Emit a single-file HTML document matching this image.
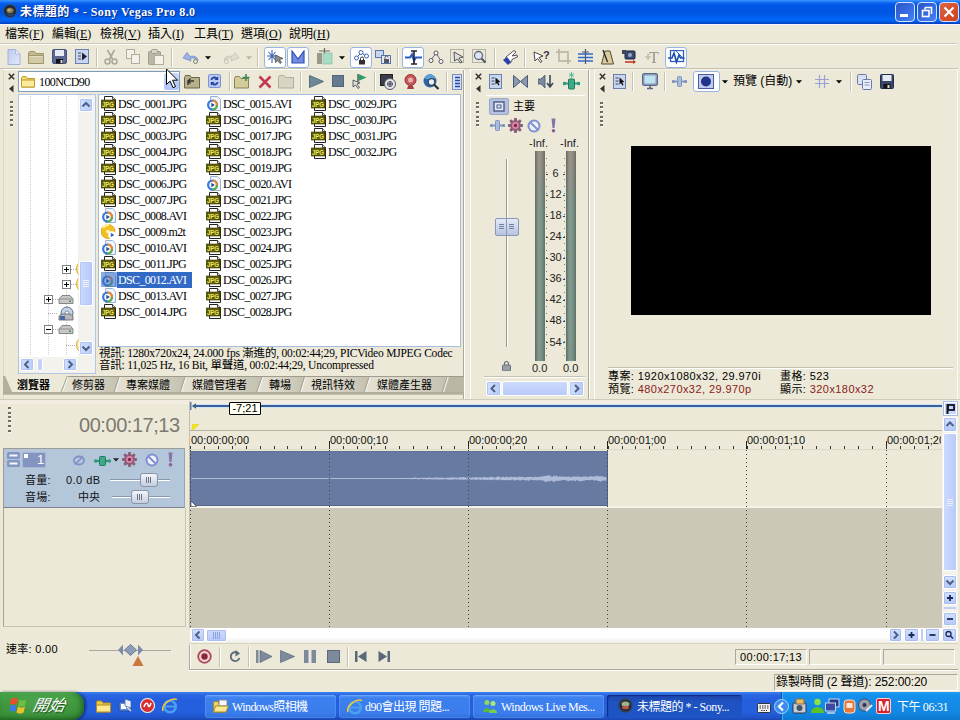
<!DOCTYPE html>
<html><head><meta charset="utf-8"><title>Sony Vegas Pro 8.0</title>
<style>
html,body{margin:0;padding:0}
body{width:960px;height:720px;position:relative;overflow:hidden;background:#ECE9D8;
 font-family:"Liberation Sans","Noto Sans CJK TC",sans-serif;font-size:12px;color:#000}
body div, body svg{position:absolute;box-sizing:border-box}
.ser{font-family:"Liberation Serif","Noto Sans CJK TC",serif}
.sans{font-family:"Liberation Sans","Noto Sans CJK TC",sans-serif}
</style></head><body>

<!-- gen_top -->
<div style="left:0px;top:0px;width:960px;height:24px;background:linear-gradient(to bottom,#3A94FF 0,#2A86FC 1px,#0A64F0 3px,#0057E6 5px,#0054E2 12px,#0058E8 15px,#0264F4 18px,#0468F8 20px,#0258E0 22px,#003CB8 24px)"></div>
<div style="left:0px;top:24px;width:960px;height:1px;background:#F4F4FC"></div>
<svg style="left:3px;top:4px;" width="14" height="14" viewBox="0 0 14 14"><circle cx="7" cy="7" r="6.500" fill="#1E2A3C"/><circle cx="7" cy="7" r="6.500" fill="none" stroke="#3C5C7C" stroke-width=".8"/><ellipse cx="7" cy="6.500" rx="3.600" ry="2.800" fill="#8A7A50"/><ellipse cx="6.200" cy="6" rx="1.600" ry="1.200" fill="#C8B070"/><path d="M2.500 9.500a5 5 0 009 0" fill="#2A4468"/></svg>
<div class="ser" style="left:20px;top:4px;white-space:nowrap;color:#fff;font-weight:bold;font-size:12px;line-height:16px;text-shadow:1px 1px 0 #0A2A80;letter-spacing:0.42px">未標題的 * - Sony Vegas Pro 8.0</div>
<div style="left:895px;top:2px;width:20px;height:20px;background:linear-gradient(135deg,#2A56C8 0%,#3468DC 45%,#3C74EC 75%,#4C88F8 100%);border:1px solid #D4E2FC;border-radius:4px"></div>
<div style="left:900px;top:14px;width:8px;height:3px;background:#fff"></div>
<div style="left:917px;top:2px;width:20px;height:20px;background:linear-gradient(135deg,#2A56C8 0%,#3468DC 45%,#3C74EC 75%,#4C88F8 100%);border:1px solid #D4E2FC;border-radius:4px"></div>
<svg style="left:921px;top:6px;" width="12" height="12" viewBox="0 0 12 12"><path d="M4 1.5h6.5v6.5M4 1.5v2" stroke="#fff" stroke-width="1.6" fill="none"/><rect x="1.5" y="4.5" width="6.5" height="6" stroke="#fff" stroke-width="1.6" fill="none"/></svg>
<div style="left:939px;top:2px;width:20px;height:20px;background:linear-gradient(135deg,#D86848 0%,#D8502C 50%,#C84420 100%);border:1px solid #D4E2FC;border-radius:4px"></div>
<svg style="left:943px;top:6px;" width="12" height="12" viewBox="0 0 12 12"><path d="M1.500 1.500l9 9M10.500 1.500l-9 9" stroke="#fff" stroke-width="2.2" fill="none"/></svg>
<div class="ser" style="left:5px;top:27px;white-space:nowrap;font-size:12px;line-height:14px">檔案(<u>F</u>)</div>
<div class="ser" style="left:52px;top:27px;white-space:nowrap;font-size:12px;line-height:14px">編輯(<u>E</u>)</div>
<div class="ser" style="left:100px;top:27px;white-space:nowrap;font-size:12px;line-height:14px">檢視(<u>V</u>)</div>
<div class="ser" style="left:148px;top:27px;white-space:nowrap;font-size:12px;line-height:14px">插入(<u>I</u>)</div>
<div class="ser" style="left:194px;top:27px;white-space:nowrap;font-size:12px;line-height:14px">工具(<u>T</u>)</div>
<div class="ser" style="left:241px;top:27px;white-space:nowrap;font-size:12px;line-height:14px">選項(<u>O</u>)</div>
<div class="ser" style="left:289px;top:27px;white-space:nowrap;font-size:12px;line-height:14px">說明(<u>H</u>)</div>
<div style="left:0px;top:43px;width:957px;height:1px;background:#CFCBBB"></div>
<div style="left:0px;top:44px;width:957px;height:1px;background:#fff"></div>
<div style="left:0px;top:68px;width:958px;height:1px;background:#C5C2B0"></div>
<svg style="left:7px;top:49px;" width="14" height="16" viewBox="0 0 14 16"><defs><linearGradient id="nd" x1="0" x2="1" y1="0" y2="1"><stop offset="0" stop-color="#BCC8EE"/><stop offset="1" stop-color="#E4EAFA"/></linearGradient></defs><path d="M1 .5h7.500l4.500 4.500v10.500H1z" fill="url(#nd)" stroke="#A4B2DE"/><path d="M8.500 .5v4.500h4.500z" fill="#EEF2FC" stroke="#A4B2DE" stroke-width=".8"/></svg>
<svg style="left:28px;top:50px;" width="17" height="14" viewBox="0 0 17 14"><path d="M.5 3V13.500h15V3.500H8L6.500 1.500H1.500z" fill="#C4BA92" stroke="#A0966E"/><path d="M.5 13.500V5.500h15v8z" fill="#D2CAA6" stroke="#A0966E"/><path d="M1.500 6.500h13" stroke="#E4DEC4"/></svg>
<svg style="left:52px;top:49px;" width="15" height="15" viewBox="0 0 15 15"><rect x=".5" y=".5" width="14" height="14" rx="1.500" fill="#5A6892" stroke="#46527C"/><rect x="3" y="1" width="9" height="6" fill="#E6EAF4"/><rect x="4" y="10" width="7" height="4.500" fill="#111"/><rect x="8.500" y="11" width="2" height="3" fill="#ddd"/></svg>
<svg style="left:75px;top:49px;" width="14" height="15" viewBox="0 0 14 15"><rect x=".5" y=".5" width="13" height="14" fill="#C9D6F0" stroke="#6A7FB0"/><path d="M3 4h3M3 7h3M3 10h3" stroke="#445" /><path d="M7 3.500v8l5-4z" fill="#223"/></svg>
<div style="left:96px;top:48px;width:1px;height:19px;background:#C5C2B0"></div>
<div style="left:97px;top:48px;width:1px;height:19px;background:#fff"></div>
<svg style="left:104px;top:49px;" width="14" height="16" viewBox="0 0 14 16"><path d="M3.500 1l5 9M10.500 1l-5 9" stroke="#A9A798" stroke-width="1.600" fill="none"/><circle cx="3.500" cy="12.500" r="2.500" fill="none" stroke="#A9A798" stroke-width="1.500"/><circle cx="10.500" cy="12.500" r="2.500" fill="none" stroke="#A9A798" stroke-width="1.500"/></svg>
<svg style="left:126px;top:49px;" width="14" height="16" viewBox="0 0 14 16"><rect x=".5" y=".5" width="8" height="9" fill="#F4F2E8" stroke="#B0AD9C"/><rect x="5.500" y="5.500" width="8" height="9" fill="#F4F2E8" stroke="#B0AD9C"/></svg>
<svg style="left:148px;top:49px;" width="16" height="16" viewBox="0 0 16 16"><rect x=".5" y="2.500" width="12" height="13" rx="1" fill="#B9B6A6" stroke="#A09D8C"/><rect x="3.500" y=".5" width="6" height="4" rx="1" fill="#D8D5C6" stroke="#A09D8C"/><rect x="6.500" y="6.500" width="9" height="9" fill="#F4F2E8" stroke="#B0AD9C"/></svg>
<div style="left:171px;top:48px;width:1px;height:19px;background:#C5C2B0"></div>
<div style="left:172px;top:48px;width:1px;height:19px;background:#fff"></div>
<svg style="left:182px;top:51px;" width="18" height="13" viewBox="0 0 18 13"><path d="M1 7L5 1.500 8 5.500c4-1 7 0 8 4-2-2.500-5-3-8-2L9 10z" fill="#9DB3E6" stroke="#6F8AC8" stroke-width=".8"/><circle cx="13.500" cy="10.500" r="2" fill="#ECE9D8" stroke="#7A7A70"/></svg>
<svg style="left:205px;top:56px;" width="6" height="4" viewBox="0 0 6 4"><path d="M0 .3h6l-3 3.200z" fill="#000"/></svg>
<svg style="left:222px;top:51px;" width="18" height="13" viewBox="0 0 18 13"><path d="M17 7L13 1.500 10 5.500c-4-1-7 0-8 4 2-2.500 5-3 8-2L9 10z" fill="#E0DED0" stroke="#C4C1B0" stroke-width=".8"/><circle cx="4.500" cy="10.500" r="2" fill="#ECE9D8" stroke="#C4C1B0"/></svg>
<svg style="left:246px;top:56px;" width="6" height="4" viewBox="0 0 6 4"><path d="M0 .3h6l-3 3.200z" fill="#B8B5A4"/></svg>
<div style="left:257px;top:48px;width:1px;height:19px;background:#C5C2B0"></div>
<div style="left:258px;top:48px;width:1px;height:19px;background:#fff"></div>
<div style="left:264px;top:47px;width:22px;height:21px;background:#fff;border:1px solid #98B5E2;border-radius:3px"></div>
<svg style="left:267px;top:50px;" width="17" height="15" viewBox="0 0 17 15"><path d="M5 0v13M0 6h11M1.500 2l7 8M8.500 2l-7 8" stroke="#3C66B0" stroke-width="1.100"/><path d="M8 5l8 3.500-3.500 1 2 3-1.500 1-2-3-2.500 2z" fill="#8C8C8C" stroke="#444" stroke-width=".7"/></svg>
<div style="left:287px;top:47px;width:22px;height:21px;background:#fff;border:1px solid #98B5E2;border-radius:3px"></div>
<svg style="left:291px;top:50px;" width="14" height="14" viewBox="0 0 14 14"><path d="M1 1v12h12V1L7 9z" fill="#6F8CE0" stroke="#3050B0" stroke-width="1.200"/></svg>
<svg style="left:316px;top:48px;" width="17" height="17" viewBox="0 0 17 17"><rect x="1" y="5" width="5" height="11" fill="#9A988A"/><rect x="7" y="5" width="9" height="11" fill="#A8DCC4" stroke="#7AB89C" stroke-width=".6"/><path d="M3 3h11M8.500 0v5" stroke="#6A6A60" stroke-width="1.200"/></svg>
<svg style="left:339px;top:56px;" width="6" height="4" viewBox="0 0 6 4"><path d="M0 .3h6l-3 3.200z" fill="#000"/></svg>
<div style="left:350px;top:47px;width:22px;height:21px;background:#fff;border:1px solid #98B5E2;border-radius:3px"></div>
<svg style="left:354px;top:50px;" width="15" height="15" viewBox="0 0 15 15"><path d="M2.500 8L7 2.500 12 6" stroke="#3C66B0" fill="none"/><circle cx="2.500" cy="8" r="2" fill="#fff" stroke="#3C66B0"/><circle cx="7" cy="2.500" r="2" fill="#fff" stroke="#3C66B0"/><circle cx="12.500" cy="6" r="2" fill="#fff" stroke="#3C66B0"/><rect x="5" y="10" width="6" height="4.500" fill="#333"/><path d="M6.500 10V8.500a1.500 1.500 0 013 0V10" stroke="#333" fill="none"/></svg>
<svg style="left:375px;top:49px;" width="17" height="16" viewBox="0 0 17 16"><rect x=".5" y="1.500" width="8" height="7" fill="#C9D6F0" stroke="#5A74AC"/><rect x="6.500" y="6.500" width="9" height="8" fill="#E4E8F0" stroke="#5A74AC"/><rect x="9" y="10" width="5" height="4" fill="#556"/><path d="M10 10V8.500a1.500 1.500 0 013 0" stroke="#556" fill="none"/></svg>
<div style="left:397px;top:48px;width:1px;height:19px;background:#C5C2B0"></div>
<div style="left:398px;top:48px;width:1px;height:19px;background:#fff"></div>
<div style="left:402px;top:47px;width:22px;height:21px;background:#fff;border:1px solid #98B5E2;border-radius:3px"></div>
<svg style="left:405px;top:50px;" width="17" height="15" viewBox="0 0 17 15"><path d="M0 7.500h5l2-3 2 6 2-3h6" stroke="#2C5FC0" stroke-width="2.200" fill="none"/><path d="M6 1h6M6 14h6M9 1v13" stroke="#223" stroke-width="1.600"/></svg>
<svg style="left:428px;top:50px;" width="16" height="15" viewBox="0 0 16 15"><path d="M3 10L8 3l5 8" stroke="#667" fill="none"/><circle cx="3" cy="10.500" r="2" fill="#fff" stroke="#556"/><circle cx="8" cy="3" r="2" fill="#fff" stroke="#556"/><circle cx="13" cy="11.500" r="2" fill="#fff" stroke="#556"/></svg>
<svg style="left:450px;top:49px;" width="16" height="16" viewBox="0 0 16 16"><rect x=".5" y=".5" width="13" height="13" fill="none" stroke="#777" stroke-dasharray="1 1"/><path d="M4 3l9 5-4 1 3 4-1.500 1-3-4-3 2z" fill="#ddd" stroke="#333" stroke-width=".8"/></svg>
<svg style="left:472px;top:49px;" width="16" height="16" viewBox="0 0 16 16"><rect x=".5" y=".5" width="13" height="13" fill="none" stroke="#777" stroke-dasharray="1 1"/><circle cx="6.500" cy="6.500" r="4" fill="#D8E6F8" stroke="#667" stroke-width="1.300"/><path d="M9.500 9.500l4 4" stroke="#556" stroke-width="2"/></svg>
<div style="left:494px;top:48px;width:1px;height:19px;background:#C5C2B0"></div>
<div style="left:495px;top:48px;width:1px;height:19px;background:#fff"></div>
<svg style="left:502px;top:49px;" width="17" height="16" viewBox="0 0 17 16"><path d="M4 8L12 1.500l2 1.500-4 4 5-1 .5 2-5 2-2 4-4-1z" fill="#fff" stroke="#444" stroke-width=".9"/><path d="M1 11l4-3 4 5-3 3z" fill="#2A3FA8"/></svg>
<div style="left:524px;top:48px;width:1px;height:19px;background:#C5C2B0"></div>
<div style="left:525px;top:48px;width:1px;height:19px;background:#fff"></div>
<svg style="left:533px;top:49px;" width="17" height="16" viewBox="0 0 17 16"><path d="M1 3l9 4-4 1.500 3 4-1.500 1-3-4L2 12z" fill="#fff" stroke="#333" stroke-width=".9"/><text x="10" y="10" font-size="11" font-weight="bold" font-family="Liberation Sans,sans-serif" fill="#334">?</text></svg>
<svg style="left:556px;top:49px;" width="15" height="15" viewBox="0 0 15 15"><path d="M3 0v12h12M0 3h12v12" stroke="#B4B1A0" stroke-width="1.500" fill="none"/></svg>
<svg style="left:578px;top:49px;" width="15" height="16" viewBox="0 0 15 16"><path d="M0 5h15M0 8.500h15M0 12h15" stroke="#2C6AD0" stroke-width="1.400"/><path d="M7.500 0v15M4 3h7" stroke="#556" stroke-width="1.200"/></svg>
<svg style="left:601px;top:49px;" width="13" height="16" viewBox="0 0 13 16"><path d="M4 2h5l3.500 13H.5z" fill="#D8CBA0" stroke="#5A4A2A"/><path d="M6.500 13L2 1" stroke="#222" stroke-width="1.300"/></svg>
<svg style="left:622px;top:49px;" width="17" height="16" viewBox="0 0 17 16"><rect x="3" y="2" width="10" height="8" rx="1" fill="#3A4A78" stroke="#223"/><rect x="0" y="1" width="4" height="4" fill="#445"/><circle cx="8" cy="6" r="2" fill="#9AB"/><path d="M3 13h10" stroke="#C03020" stroke-width="1.500"/><path d="M11 11l3 2-3 2z" fill="#C03020"/></svg>
<svg style="left:645px;top:49px;" width="16" height="16" viewBox="0 0 16 16"><text x="4" y="14" font-size="16" font-family="Liberation Serif,serif" fill="#9A978A">T</text><path d="M0 8h6M3 5v6" stroke="#B4B1A0" stroke-width="1.200"/></svg>
<div style="left:665px;top:47px;width:22px;height:21px;background:#fff;border:1px solid #98B5E2;border-radius:3px"></div>
<svg style="left:668px;top:50px;" width="17" height="15" viewBox="0 0 17 15"><rect x="2.500" y=".5" width="13" height="11" fill="#fff" stroke="#2C5FC0" stroke-width="1.300"/><path d="M0 8h4l2-5 2.500 9 2.500-7 1.500 3h4" stroke="#1C4FB0" stroke-width="1.600" fill="none"/><path d="M8 1l7 7" stroke="#2C5FC0"/></svg>
<!-- gen_explorer -->
<div style="left:3px;top:69px;width:461px;height:1px;background:#fff"></div>
<div style="left:3px;top:70px;width:1px;height:329px;background:#DCD8C8"></div>
<div style="left:463px;top:70px;width:1px;height:329px;background:#ACA899"></div>
<div style="left:464px;top:70px;width:1px;height:329px;background:#fff"></div>
<svg style="left:8px;top:73px;" width="7" height="7" viewBox="0 0 7 7"><path d="M.8 .8l5.400 5.400M6.200 .8l-5.400 5.400" stroke="#333" stroke-width="1.500"/></svg>
<svg style="left:8px;top:85px;" width="7" height="8" viewBox="0 0 7 8"><path d="M5.500 0v7.500l-4.500-3.700z" fill="#333"/></svg>
<div style="left:10px;top:101px;width:3px;height:2px;background:#6E6C5E"></div>
<div style="left:11px;top:102px;width:2px;height:2px;background:#fff;z-index:-1"></div>
<div style="left:11px;top:102.0px;width:2px;height:2px;background:#fff;opacity:.0"></div>
<div style="left:10px;top:106px;width:3px;height:2px;background:#6E6C5E"></div>
<div style="left:11px;top:107px;width:2px;height:2px;background:#fff;z-index:-1"></div>
<div style="left:11px;top:106.5px;width:2px;height:2px;background:#fff;opacity:.0"></div>
<div style="left:10px;top:110px;width:3px;height:2px;background:#6E6C5E"></div>
<div style="left:11px;top:111px;width:2px;height:2px;background:#fff;z-index:-1"></div>
<div style="left:11px;top:111.0px;width:2px;height:2px;background:#fff;opacity:.0"></div>
<div style="left:10px;top:114px;width:3px;height:2px;background:#6E6C5E"></div>
<div style="left:11px;top:115px;width:2px;height:2px;background:#fff;z-index:-1"></div>
<div style="left:11px;top:115.5px;width:2px;height:2px;background:#fff;opacity:.0"></div>
<div style="left:10px;top:119px;width:3px;height:2px;background:#6E6C5E"></div>
<div style="left:11px;top:120px;width:2px;height:2px;background:#fff;z-index:-1"></div>
<div style="left:11px;top:120.0px;width:2px;height:2px;background:#fff;opacity:.0"></div>
<div style="left:10px;top:124px;width:3px;height:2px;background:#6E6C5E"></div>
<div style="left:11px;top:125px;width:2px;height:2px;background:#fff;z-index:-1"></div>
<div style="left:11px;top:124.5px;width:2px;height:2px;background:#fff;opacity:.0"></div>
<div style="left:18px;top:71px;width:162px;height:21px;background:#fff;border:1px solid #7F9DB9"></div>
<svg style="left:21px;top:75px;" width="15" height="13" viewBox="0 0 15 13"><path d="M.5 2.500V12h13V3.500H6.500L5 1.500H1.500z" fill="#F4D870" stroke="#C09A28"/><path d="M.5 12V5h13v7z" fill="#FCEB9C" stroke="#C09A28"/></svg>
<div class="ser" style="left:39px;top:75px;white-space:nowrap;font-size:12px;line-height:14px;letter-spacing:-.6px">100NCD90</div>
<div style="left:164px;top:73px;width:15px;height:17px;background:linear-gradient(#C8D8FC,#B0C4F6);border-radius:2px"></div>
<svg style="left:165px;top:68px;" width="14" height="22" viewBox="0 0 14 22"><path d="M1.500 1v15.500l3.600-3.400 2.900 6.600 2.500-1.100-2.900-6.400h4.900z" fill="#fff" stroke="#000" stroke-width="1"/></svg>
<svg style="left:184px;top:74px;" width="17" height="15" viewBox="0 0 17 15"><path d="M.5 3.500V14h15V3.500H7.500L6 1.500H1.500z" fill="#B8B08A" stroke="#6A6448"/><path d="M4 11V7h6M4 7l2.500-2.500M4 7l2.500 2.500" stroke="#333" stroke-width="1.400" fill="none"/></svg>
<div style="left:208px;top:74px;width:13px;height:14px;background:#BCCAF2;border:1px solid #7C94D8;border-radius:2px"></div>
<svg style="left:209px;top:75px;" width="11" height="12" viewBox="0 0 11 12"><path d="M1.500 5a4 4 0 016.500-2.500l1.200-1.200V5H5.500l1.200-1.200A2.300 2.300 0 003.200 5zM9.500 7a4 4 0 01-6.500 2.500l-1.200 1.200V7H5.500L4.300 8.200A2.300 2.300 0 007.800 7z" fill="#2440A0"/></svg>
<div style="left:229px;top:72px;width:1px;height:19px;background:#C5C2B0"></div>
<div style="left:230px;top:72px;width:1px;height:19px;background:#fff"></div>
<svg style="left:234px;top:74px;" width="17" height="15" viewBox="0 0 17 15"><path d="M.5 4.500V14h14V4.500H7L5.500 2.500H1.500z" fill="#D4CC98" stroke="#8A8258"/><path d="M12 0v7M8.500 3.500h7" stroke="#3A8A5A" stroke-width="1.600"/></svg>
<svg style="left:258px;top:75px;" width="14" height="14" viewBox="0 0 14 14"><path d="M1.500 1.500l11 11M12.500 1.500l-11 11" stroke="#C23A52" stroke-width="2.600"/></svg>
<svg style="left:278px;top:74px;" width="17" height="15" viewBox="0 0 17 15"><path d="M.5 3.500V14h15V3.500H7.500L6 1.500H1.500z" fill="#D8D5C4" stroke="#B0AD9C"/></svg>
<div style="left:300px;top:72px;width:1px;height:19px;background:#C5C2B0"></div>
<div style="left:301px;top:72px;width:1px;height:19px;background:#fff"></div>
<svg style="left:309px;top:75px;" width="15" height="13" viewBox="0 0 15 13"><path d="M.5 .5v12l14-6z" fill="#6E8898" stroke="#587080"/></svg>
<svg style="left:332px;top:75px;" width="13" height="13" viewBox="0 0 13 13"><rect x=".5" y=".5" width="11" height="11" fill="#667A92" stroke="#50647C"/></svg>
<svg style="left:352px;top:73px;" width="16" height="17" viewBox="0 0 16 17"><path d="M6 1v8" stroke="#444" stroke-width="1.300"/><path d="M6.500 1l8 3.500-8 3.500z" fill="#2E9A6A"/><path d="M1 7l7 3-3 1 2.500 3.500-1.500 1-2.500-3.500-2.500 2z" fill="#ddd" stroke="#444" stroke-width=".8"/></svg>
<div style="left:374px;top:72px;width:1px;height:19px;background:#C5C2B0"></div>
<div style="left:375px;top:72px;width:1px;height:19px;background:#fff"></div>
<svg style="left:380px;top:74px;" width="17" height="16" viewBox="0 0 17 16"><rect x=".5" y=".5" width="12" height="11" fill="#3A3E4C" stroke="#222"/><circle cx="10" cy="10" r="5.500" fill="#E8E8EC" stroke="#556"/><path d="M7 10h6M10 7v6" stroke="#334" stroke-width="1"/><circle cx="10" cy="10" r="2.500" fill="none" stroke="#556"/></svg>
<svg style="left:403px;top:74px;" width="15" height="16" viewBox="0 0 15 16"><circle cx="7.500" cy="6" r="5.500" fill="#C85858" stroke="#8A3030"/><circle cx="7.500" cy="6" r="2.500" fill="#E8B0B0"/><path d="M4 15h7l-1-3H5z" fill="#A84040"/></svg>
<svg style="left:423px;top:74px;" width="17" height="16" viewBox="0 0 17 16"><circle cx="7" cy="7" r="6.500" fill="#2C66A8"/><path d="M2 5a5 5 0 0110 0" fill="#5CA0D8"/><circle cx="8.500" cy="8" r="3.300" fill="#E4EEF8" stroke="#345" stroke-width="1.200"/><path d="M11 10.500l4.500 4.500" stroke="#234" stroke-width="2.200"/></svg>
<div style="left:446px;top:72px;width:1px;height:19px;background:#C5C2B0"></div>
<div style="left:447px;top:72px;width:1px;height:19px;background:#fff"></div>
<svg style="left:452px;top:74px;" width="10" height="16" viewBox="0 0 10 16"><rect x=".5" y=".5" width="9" height="15" fill="#D4E0F8" stroke="#7A90C0"/><path d="M3 3.500h5M3 6.500h5M3 9.500h5M3 12.500h5" stroke="#2A4A9A" stroke-width="1.400"/></svg>
<div style="left:18px;top:94px;width:78px;height:280px;background:#fff;border:1px solid #B4C4E4"></div>
<div style="left:30px;top:96px;width:1px;height:260px;background:repeating-linear-gradient(to bottom,#CDCDCD 0 1px,#fff 1px 2px)"></div>
<div style="left:48px;top:96px;width:1px;height:260px;background:repeating-linear-gradient(to bottom,#CDCDCD 0 1px,#fff 1px 2px)"></div>
<div style="left:66px;top:96px;width:1px;height:260px;background:repeating-linear-gradient(to bottom,#CDCDCD 0 1px,#fff 1px 2px)"></div>
<div style="left:78px;top:95px;width:17px;height:262px;background:#F3F2EC"></div>
<div style="left:79px;top:98px;width:14px;height:14px;background:linear-gradient(to right,#D2E0FE,#B8CCFA);border:1px solid #fff;border-radius:2px;box-shadow:inset 0 0 0 1px #B0C4F4"></div>
<svg style="left:79px;top:98px;" width="14" height="14" viewBox="0 0 14 14"><path d="M3.5 8.5L7.0 5.0L10.5 8.5" stroke="#4D6185" stroke-width="2" fill="none"/></svg>
<div style="left:79px;top:261px;width:14px;height:45px;background:linear-gradient(to right,#CCDAFE,#B6C8F8);border:1px solid #fff;border-radius:2px;box-shadow:inset 0 0 0 1px #B4C8F6"></div>
<div style="left:83px;top:280px;width:6px;height:1px;background:#EEF4FE"></div>
<div style="left:83px;top:282px;width:6px;height:1px;background:#EEF4FE"></div>
<div style="left:83px;top:284px;width:6px;height:1px;background:#EEF4FE"></div>
<div style="left:83px;top:286px;width:6px;height:1px;background:#EEF4FE"></div>
<div style="left:79px;top:341px;width:14px;height:14px;background:linear-gradient(to right,#D2E0FE,#B8CCFA);border:1px solid #fff;border-radius:2px;box-shadow:inset 0 0 0 1px #B0C4F4"></div>
<svg style="left:79px;top:341px;" width="14" height="14" viewBox="0 0 14 14"><path d="M3.5 5.5L7.0 9.0L10.5 5.5" stroke="#4D6185" stroke-width="2" fill="none"/></svg>
<div style="left:19px;top:357px;width:59px;height:16px;background:#F3F2EC"></div>
<div style="left:20px;top:358px;width:14px;height:13px;background:linear-gradient(to right,#D2E0FE,#B8CCFA);border:1px solid #fff;border-radius:2px;box-shadow:inset 0 0 0 1px #B0C4F4"></div>
<svg style="left:20px;top:358px;" width="14" height="13" viewBox="0 0 14 13"><path d="M8.5 3.0L5.0 6.5L8.5 10.0" stroke="#4D6185" stroke-width="2" fill="none"/></svg>
<div style="left:63px;top:358px;width:14px;height:13px;background:linear-gradient(to right,#D2E0FE,#B8CCFA);border:1px solid #fff;border-radius:2px;box-shadow:inset 0 0 0 1px #B0C4F4"></div>
<svg style="left:63px;top:358px;" width="14" height="13" viewBox="0 0 14 13"><path d="M5.5 3.0L9.0 6.5L5.5 10.0" stroke="#4D6185" stroke-width="2" fill="none"/></svg>
<div style="left:37px;top:358px;width:6px;height:13px;background:#C2D2FA;border:1px solid #fff;border-radius:2px"></div>
<div style="left:78px;top:357px;width:17px;height:16px;background:#F3F2EC"></div>
<svg style="left:62px;top:265px;" width="9" height="9" viewBox="0 0 9 9"><rect x=".5" y=".5" width="8" height="8" fill="#fff" stroke="#808080"/><path d="M2 4.500h5 M4.500 2v5" stroke="#000"/></svg>
<div style="left:71px;top:269px;width:5px;height:1px;background:repeating-linear-gradient(to right,#B0B0B0 0 1px,#fff 1px 2px)"></div>
<svg style="left:75px;top:263px;" width="4" height="12" viewBox="0 0 4 12"><path d="M3.500 .5C1 2 1 10 3.500 11.500" stroke="#D8A838" fill="#FCE898"/></svg>
<svg style="left:62px;top:280px;" width="9" height="9" viewBox="0 0 9 9"><rect x=".5" y=".5" width="8" height="8" fill="#fff" stroke="#808080"/><path d="M2 4.500h5 M4.500 2v5" stroke="#000"/></svg>
<div style="left:71px;top:284px;width:5px;height:1px;background:repeating-linear-gradient(to right,#B0B0B0 0 1px,#fff 1px 2px)"></div>
<svg style="left:75px;top:278px;" width="4" height="12" viewBox="0 0 4 12"><path d="M3.500 .5C1 2 1 10 3.500 11.500" stroke="#D8A838" fill="#FCE898"/></svg>
<svg style="left:44px;top:295px;" width="9" height="9" viewBox="0 0 9 9"><rect x=".5" y=".5" width="8" height="8" fill="#fff" stroke="#808080"/><path d="M2 4.500h5 M4.500 2v5" stroke="#000"/></svg>
<div style="left:53px;top:299px;width:5px;height:1px;background:repeating-linear-gradient(to right,#B0B0B0 0 1px,#fff 1px 2px)"></div>
<svg style="left:58px;top:294px;" width="16" height="12" viewBox="0 0 16 12"><path d="M1 5l3-3.500h8l3 3.500v4.500H1z" fill="#C8C8C8" stroke="#707070" stroke-width=".8"/><path d="M1 5h14" stroke="#909090"/><rect x="11" y="6.500" width="2" height="1.500" fill="#3A9A3A"/></svg>
<div style="left:48px;top:313px;width:10px;height:1px;background:repeating-linear-gradient(to right,#B0B0B0 0 1px,#fff 1px 2px)"></div>
<svg style="left:58px;top:306px;" width="16" height="16" viewBox="0 0 16 16"><circle cx="9" cy="7" r="6" fill="#C4D4E4" stroke="#5A7088"/><circle cx="9" cy="7" r="2" fill="#fff" stroke="#5A7088" stroke-width=".7"/><path d="M1 10l3-2h8l3 2v4H1z" fill="#B8B8B8" stroke="#606060" stroke-width=".8"/><rect x="2" y="10" width="5" height="4" fill="#4A6AA8"/></svg>
<svg style="left:44px;top:325px;" width="9" height="9" viewBox="0 0 9 9"><rect x=".5" y=".5" width="8" height="8" fill="#fff" stroke="#808080"/><path d="M2 4.500h5" stroke="#000"/></svg>
<div style="left:53px;top:329px;width:5px;height:1px;background:repeating-linear-gradient(to right,#B0B0B0 0 1px,#fff 1px 2px)"></div>
<svg style="left:58px;top:324px;" width="16" height="12" viewBox="0 0 16 12"><path d="M1 5l3-3.500h8l3 3.500v4.500H1z" fill="#C8C8C8" stroke="#707070" stroke-width=".8"/><path d="M1 5h14" stroke="#909090"/><rect x="11" y="6.500" width="2" height="1.500" fill="#3A9A3A"/></svg>
<div style="left:66px;top:345px;width:9px;height:1px;background:repeating-linear-gradient(to right,#B0B0B0 0 1px,#fff 1px 2px)"></div>
<svg style="left:75px;top:339px;" width="4" height="12" viewBox="0 0 4 12"><path d="M3.500 .5C1 2 1 10 3.500 11.500" stroke="#D8A838" fill="#FCE898"/></svg>
<div style="left:98px;top:94px;width:363px;height:253px;background:#fff;border:1px solid #A5BBE0"></div>
<svg style="left:101px;top:96px;" width="16" height="15" viewBox="0 0 16 15"><path d="M3.500 .5h8l3 3v11h-11z" fill="#fff" stroke="#222"/><path d="M11.500 .5v3h3" fill="#ddd" stroke="#222" stroke-width=".8"/><rect x="0" y="4" width="14" height="8" fill="#5E5E08"/><rect x="0" y="4" width="14" height="8" fill="none" stroke="#3A3A00" stroke-width=".6"/><text x="1" y="10.500" font-size="6.500" font-weight="bold" font-family="Liberation Sans,sans-serif" fill="#F0E860" textLength="12" lengthAdjust="spacingAndGlyphs">JPG</text></svg>
<div class="ser" style="left:118px;top:97px;white-space:nowrap;font-size:12px;line-height:14px;letter-spacing:-.65px">DSC_0001.JPG</div>
<svg style="left:101px;top:112px;" width="16" height="15" viewBox="0 0 16 15"><path d="M3.500 .5h8l3 3v11h-11z" fill="#fff" stroke="#222"/><path d="M11.500 .5v3h3" fill="#ddd" stroke="#222" stroke-width=".8"/><rect x="0" y="4" width="14" height="8" fill="#5E5E08"/><rect x="0" y="4" width="14" height="8" fill="none" stroke="#3A3A00" stroke-width=".6"/><text x="1" y="10.500" font-size="6.500" font-weight="bold" font-family="Liberation Sans,sans-serif" fill="#F0E860" textLength="12" lengthAdjust="spacingAndGlyphs">JPG</text></svg>
<div class="ser" style="left:118px;top:113px;white-space:nowrap;font-size:12px;line-height:14px;letter-spacing:-.65px">DSC_0002.JPG</div>
<svg style="left:101px;top:128px;" width="16" height="15" viewBox="0 0 16 15"><path d="M3.500 .5h8l3 3v11h-11z" fill="#fff" stroke="#222"/><path d="M11.500 .5v3h3" fill="#ddd" stroke="#222" stroke-width=".8"/><rect x="0" y="4" width="14" height="8" fill="#5E5E08"/><rect x="0" y="4" width="14" height="8" fill="none" stroke="#3A3A00" stroke-width=".6"/><text x="1" y="10.500" font-size="6.500" font-weight="bold" font-family="Liberation Sans,sans-serif" fill="#F0E860" textLength="12" lengthAdjust="spacingAndGlyphs">JPG</text></svg>
<div class="ser" style="left:118px;top:129px;white-space:nowrap;font-size:12px;line-height:14px;letter-spacing:-.65px">DSC_0003.JPG</div>
<svg style="left:101px;top:144px;" width="16" height="15" viewBox="0 0 16 15"><path d="M3.500 .5h8l3 3v11h-11z" fill="#fff" stroke="#222"/><path d="M11.500 .5v3h3" fill="#ddd" stroke="#222" stroke-width=".8"/><rect x="0" y="4" width="14" height="8" fill="#5E5E08"/><rect x="0" y="4" width="14" height="8" fill="none" stroke="#3A3A00" stroke-width=".6"/><text x="1" y="10.500" font-size="6.500" font-weight="bold" font-family="Liberation Sans,sans-serif" fill="#F0E860" textLength="12" lengthAdjust="spacingAndGlyphs">JPG</text></svg>
<div class="ser" style="left:118px;top:145px;white-space:nowrap;font-size:12px;line-height:14px;letter-spacing:-.65px">DSC_0004.JPG</div>
<svg style="left:101px;top:160px;" width="16" height="15" viewBox="0 0 16 15"><path d="M3.500 .5h8l3 3v11h-11z" fill="#fff" stroke="#222"/><path d="M11.500 .5v3h3" fill="#ddd" stroke="#222" stroke-width=".8"/><rect x="0" y="4" width="14" height="8" fill="#5E5E08"/><rect x="0" y="4" width="14" height="8" fill="none" stroke="#3A3A00" stroke-width=".6"/><text x="1" y="10.500" font-size="6.500" font-weight="bold" font-family="Liberation Sans,sans-serif" fill="#F0E860" textLength="12" lengthAdjust="spacingAndGlyphs">JPG</text></svg>
<div class="ser" style="left:118px;top:161px;white-space:nowrap;font-size:12px;line-height:14px;letter-spacing:-.65px">DSC_0005.JPG</div>
<svg style="left:101px;top:176px;" width="16" height="15" viewBox="0 0 16 15"><path d="M3.500 .5h8l3 3v11h-11z" fill="#fff" stroke="#222"/><path d="M11.500 .5v3h3" fill="#ddd" stroke="#222" stroke-width=".8"/><rect x="0" y="4" width="14" height="8" fill="#5E5E08"/><rect x="0" y="4" width="14" height="8" fill="none" stroke="#3A3A00" stroke-width=".6"/><text x="1" y="10.500" font-size="6.500" font-weight="bold" font-family="Liberation Sans,sans-serif" fill="#F0E860" textLength="12" lengthAdjust="spacingAndGlyphs">JPG</text></svg>
<div class="ser" style="left:118px;top:177px;white-space:nowrap;font-size:12px;line-height:14px;letter-spacing:-.65px">DSC_0006.JPG</div>
<svg style="left:101px;top:192px;" width="16" height="15" viewBox="0 0 16 15"><path d="M3.500 .5h8l3 3v11h-11z" fill="#fff" stroke="#222"/><path d="M11.500 .5v3h3" fill="#ddd" stroke="#222" stroke-width=".8"/><rect x="0" y="4" width="14" height="8" fill="#5E5E08"/><rect x="0" y="4" width="14" height="8" fill="none" stroke="#3A3A00" stroke-width=".6"/><text x="1" y="10.500" font-size="6.500" font-weight="bold" font-family="Liberation Sans,sans-serif" fill="#F0E860" textLength="12" lengthAdjust="spacingAndGlyphs">JPG</text></svg>
<div class="ser" style="left:118px;top:193px;white-space:nowrap;font-size:12px;line-height:14px;letter-spacing:-.65px">DSC_0007.JPG</div>
<svg style="left:101px;top:208px;" width="16" height="15" viewBox="0 0 16 15"><path d="M4.500 .5h7l3 3v11h-10z" fill="#EEF3FC" stroke="#9AB0D8"/><circle cx="6.500" cy="9" r="5.500" fill="#3A7ADC"/><path d="M6.500 9L6.500 3.500A5.500 5.500 0 0112 9z" fill="#E8862A"/><path d="M6.500 9L12 9A5.500 5.500 0 016.500 14.500z" fill="#5CB040"/><circle cx="6.500" cy="9" r="3.200" fill="#fff"/><path d="M5.300 6.800v4.400l3.600-2.200z" fill="#2A4A9A"/></svg>
<div class="ser" style="left:118px;top:209px;white-space:nowrap;font-size:12px;line-height:14px;letter-spacing:-.65px">DSC_0008.AVI</div>
<svg style="left:101px;top:224px;" width="16" height="15" viewBox="0 0 16 15"><circle cx="7" cy="7.500" r="7" fill="#F2C020"/><circle cx="7" cy="7.500" r="7" fill="none" stroke="#D09A10" stroke-width=".8"/><path d="M2 4a6 6 0 016-3" stroke="#FFF0A0" stroke-width="2" fill="none"/><circle cx="7" cy="7.500" r="1.800" fill="#FFF6C8"/><circle cx="11" cy="11" r="3.800" fill="#fff"/><path d="M9.800 8.800v4.400l3.600-2.200z" fill="#2A6AD8"/></svg>
<div class="ser" style="left:118px;top:225px;white-space:nowrap;font-size:12px;line-height:14px;letter-spacing:-.65px">DSC_0009.m2t</div>
<svg style="left:101px;top:240px;" width="16" height="15" viewBox="0 0 16 15"><path d="M4.500 .5h7l3 3v11h-10z" fill="#EEF3FC" stroke="#9AB0D8"/><circle cx="6.500" cy="9" r="5.500" fill="#3A7ADC"/><path d="M6.500 9L6.500 3.500A5.500 5.500 0 0112 9z" fill="#E8862A"/><path d="M6.500 9L12 9A5.500 5.500 0 016.500 14.500z" fill="#5CB040"/><circle cx="6.500" cy="9" r="3.200" fill="#fff"/><path d="M5.300 6.800v4.400l3.600-2.200z" fill="#2A4A9A"/></svg>
<div class="ser" style="left:118px;top:241px;white-space:nowrap;font-size:12px;line-height:14px;letter-spacing:-.65px">DSC_0010.AVI</div>
<svg style="left:101px;top:256px;" width="16" height="15" viewBox="0 0 16 15"><path d="M3.500 .5h8l3 3v11h-11z" fill="#fff" stroke="#222"/><path d="M11.500 .5v3h3" fill="#ddd" stroke="#222" stroke-width=".8"/><rect x="0" y="4" width="14" height="8" fill="#5E5E08"/><rect x="0" y="4" width="14" height="8" fill="none" stroke="#3A3A00" stroke-width=".6"/><text x="1" y="10.500" font-size="6.500" font-weight="bold" font-family="Liberation Sans,sans-serif" fill="#F0E860" textLength="12" lengthAdjust="spacingAndGlyphs">JPG</text></svg>
<div class="ser" style="left:118px;top:257px;white-space:nowrap;font-size:12px;line-height:14px;letter-spacing:-.65px">DSC_0011.JPG</div>
<svg style="left:101px;top:272px;" width="16" height="15" viewBox="0 0 16 15"><path d="M4.500 .5h7l3 3v11h-10z" fill="#EEF3FC" stroke="#9AB0D8"/><circle cx="6.500" cy="9" r="5.500" fill="#3A7ADC"/><path d="M6.500 9L6.500 3.500A5.500 5.500 0 0112 9z" fill="#E8862A"/><path d="M6.500 9L12 9A5.500 5.500 0 016.500 14.500z" fill="#5CB040"/><circle cx="6.500" cy="9" r="3.200" fill="#fff"/><path d="M5.300 6.800v4.400l3.600-2.200z" fill="#2A4A9A"/><rect x="0" y="0" width="16" height="15" fill="#316AC5" opacity=".55"/></svg>
<div style="left:117px;top:272px;width:75px;height:16px;background:#316AC5"></div>
<div class="ser" style="left:118px;top:273px;white-space:nowrap;font-size:12px;line-height:14px;color:#fff;letter-spacing:-.65px">DSC_0012.AVI</div>
<svg style="left:101px;top:288px;" width="16" height="15" viewBox="0 0 16 15"><path d="M4.500 .5h7l3 3v11h-10z" fill="#EEF3FC" stroke="#9AB0D8"/><circle cx="6.500" cy="9" r="5.500" fill="#3A7ADC"/><path d="M6.500 9L6.500 3.500A5.500 5.500 0 0112 9z" fill="#E8862A"/><path d="M6.500 9L12 9A5.500 5.500 0 016.500 14.500z" fill="#5CB040"/><circle cx="6.500" cy="9" r="3.200" fill="#fff"/><path d="M5.300 6.800v4.400l3.600-2.200z" fill="#2A4A9A"/></svg>
<div class="ser" style="left:118px;top:289px;white-space:nowrap;font-size:12px;line-height:14px;letter-spacing:-.65px">DSC_0013.AVI</div>
<svg style="left:101px;top:304px;" width="16" height="15" viewBox="0 0 16 15"><path d="M3.500 .5h8l3 3v11h-11z" fill="#fff" stroke="#222"/><path d="M11.500 .5v3h3" fill="#ddd" stroke="#222" stroke-width=".8"/><rect x="0" y="4" width="14" height="8" fill="#5E5E08"/><rect x="0" y="4" width="14" height="8" fill="none" stroke="#3A3A00" stroke-width=".6"/><text x="1" y="10.500" font-size="6.500" font-weight="bold" font-family="Liberation Sans,sans-serif" fill="#F0E860" textLength="12" lengthAdjust="spacingAndGlyphs">JPG</text></svg>
<div class="ser" style="left:118px;top:305px;white-space:nowrap;font-size:12px;line-height:14px;letter-spacing:-.65px">DSC_0014.JPG</div>
<svg style="left:206px;top:96px;" width="16" height="15" viewBox="0 0 16 15"><path d="M4.500 .5h7l3 3v11h-10z" fill="#EEF3FC" stroke="#9AB0D8"/><circle cx="6.500" cy="9" r="5.500" fill="#3A7ADC"/><path d="M6.500 9L6.500 3.500A5.500 5.500 0 0112 9z" fill="#E8862A"/><path d="M6.500 9L12 9A5.500 5.500 0 016.500 14.500z" fill="#5CB040"/><circle cx="6.500" cy="9" r="3.200" fill="#fff"/><path d="M5.300 6.800v4.400l3.600-2.200z" fill="#2A4A9A"/></svg>
<div class="ser" style="left:223px;top:97px;white-space:nowrap;font-size:12px;line-height:14px;letter-spacing:-.65px">DSC_0015.AVI</div>
<svg style="left:206px;top:112px;" width="16" height="15" viewBox="0 0 16 15"><path d="M3.500 .5h8l3 3v11h-11z" fill="#fff" stroke="#222"/><path d="M11.500 .5v3h3" fill="#ddd" stroke="#222" stroke-width=".8"/><rect x="0" y="4" width="14" height="8" fill="#5E5E08"/><rect x="0" y="4" width="14" height="8" fill="none" stroke="#3A3A00" stroke-width=".6"/><text x="1" y="10.500" font-size="6.500" font-weight="bold" font-family="Liberation Sans,sans-serif" fill="#F0E860" textLength="12" lengthAdjust="spacingAndGlyphs">JPG</text></svg>
<div class="ser" style="left:223px;top:113px;white-space:nowrap;font-size:12px;line-height:14px;letter-spacing:-.65px">DSC_0016.JPG</div>
<svg style="left:206px;top:128px;" width="16" height="15" viewBox="0 0 16 15"><path d="M3.500 .5h8l3 3v11h-11z" fill="#fff" stroke="#222"/><path d="M11.500 .5v3h3" fill="#ddd" stroke="#222" stroke-width=".8"/><rect x="0" y="4" width="14" height="8" fill="#5E5E08"/><rect x="0" y="4" width="14" height="8" fill="none" stroke="#3A3A00" stroke-width=".6"/><text x="1" y="10.500" font-size="6.500" font-weight="bold" font-family="Liberation Sans,sans-serif" fill="#F0E860" textLength="12" lengthAdjust="spacingAndGlyphs">JPG</text></svg>
<div class="ser" style="left:223px;top:129px;white-space:nowrap;font-size:12px;line-height:14px;letter-spacing:-.65px">DSC_0017.JPG</div>
<svg style="left:206px;top:144px;" width="16" height="15" viewBox="0 0 16 15"><path d="M3.500 .5h8l3 3v11h-11z" fill="#fff" stroke="#222"/><path d="M11.500 .5v3h3" fill="#ddd" stroke="#222" stroke-width=".8"/><rect x="0" y="4" width="14" height="8" fill="#5E5E08"/><rect x="0" y="4" width="14" height="8" fill="none" stroke="#3A3A00" stroke-width=".6"/><text x="1" y="10.500" font-size="6.500" font-weight="bold" font-family="Liberation Sans,sans-serif" fill="#F0E860" textLength="12" lengthAdjust="spacingAndGlyphs">JPG</text></svg>
<div class="ser" style="left:223px;top:145px;white-space:nowrap;font-size:12px;line-height:14px;letter-spacing:-.65px">DSC_0018.JPG</div>
<svg style="left:206px;top:160px;" width="16" height="15" viewBox="0 0 16 15"><path d="M3.500 .5h8l3 3v11h-11z" fill="#fff" stroke="#222"/><path d="M11.500 .5v3h3" fill="#ddd" stroke="#222" stroke-width=".8"/><rect x="0" y="4" width="14" height="8" fill="#5E5E08"/><rect x="0" y="4" width="14" height="8" fill="none" stroke="#3A3A00" stroke-width=".6"/><text x="1" y="10.500" font-size="6.500" font-weight="bold" font-family="Liberation Sans,sans-serif" fill="#F0E860" textLength="12" lengthAdjust="spacingAndGlyphs">JPG</text></svg>
<div class="ser" style="left:223px;top:161px;white-space:nowrap;font-size:12px;line-height:14px;letter-spacing:-.65px">DSC_0019.JPG</div>
<svg style="left:206px;top:176px;" width="16" height="15" viewBox="0 0 16 15"><path d="M4.500 .5h7l3 3v11h-10z" fill="#EEF3FC" stroke="#9AB0D8"/><circle cx="6.500" cy="9" r="5.500" fill="#3A7ADC"/><path d="M6.500 9L6.500 3.500A5.500 5.500 0 0112 9z" fill="#E8862A"/><path d="M6.500 9L12 9A5.500 5.500 0 016.500 14.500z" fill="#5CB040"/><circle cx="6.500" cy="9" r="3.200" fill="#fff"/><path d="M5.300 6.800v4.400l3.600-2.200z" fill="#2A4A9A"/></svg>
<div class="ser" style="left:223px;top:177px;white-space:nowrap;font-size:12px;line-height:14px;letter-spacing:-.65px">DSC_0020.AVI</div>
<svg style="left:206px;top:192px;" width="16" height="15" viewBox="0 0 16 15"><path d="M3.500 .5h8l3 3v11h-11z" fill="#fff" stroke="#222"/><path d="M11.500 .5v3h3" fill="#ddd" stroke="#222" stroke-width=".8"/><rect x="0" y="4" width="14" height="8" fill="#5E5E08"/><rect x="0" y="4" width="14" height="8" fill="none" stroke="#3A3A00" stroke-width=".6"/><text x="1" y="10.500" font-size="6.500" font-weight="bold" font-family="Liberation Sans,sans-serif" fill="#F0E860" textLength="12" lengthAdjust="spacingAndGlyphs">JPG</text></svg>
<div class="ser" style="left:223px;top:193px;white-space:nowrap;font-size:12px;line-height:14px;letter-spacing:-.65px">DSC_0021.JPG</div>
<svg style="left:206px;top:208px;" width="16" height="15" viewBox="0 0 16 15"><path d="M3.500 .5h8l3 3v11h-11z" fill="#fff" stroke="#222"/><path d="M11.500 .5v3h3" fill="#ddd" stroke="#222" stroke-width=".8"/><rect x="0" y="4" width="14" height="8" fill="#5E5E08"/><rect x="0" y="4" width="14" height="8" fill="none" stroke="#3A3A00" stroke-width=".6"/><text x="1" y="10.500" font-size="6.500" font-weight="bold" font-family="Liberation Sans,sans-serif" fill="#F0E860" textLength="12" lengthAdjust="spacingAndGlyphs">JPG</text></svg>
<div class="ser" style="left:223px;top:209px;white-space:nowrap;font-size:12px;line-height:14px;letter-spacing:-.65px">DSC_0022.JPG</div>
<svg style="left:206px;top:224px;" width="16" height="15" viewBox="0 0 16 15"><path d="M3.500 .5h8l3 3v11h-11z" fill="#fff" stroke="#222"/><path d="M11.500 .5v3h3" fill="#ddd" stroke="#222" stroke-width=".8"/><rect x="0" y="4" width="14" height="8" fill="#5E5E08"/><rect x="0" y="4" width="14" height="8" fill="none" stroke="#3A3A00" stroke-width=".6"/><text x="1" y="10.500" font-size="6.500" font-weight="bold" font-family="Liberation Sans,sans-serif" fill="#F0E860" textLength="12" lengthAdjust="spacingAndGlyphs">JPG</text></svg>
<div class="ser" style="left:223px;top:225px;white-space:nowrap;font-size:12px;line-height:14px;letter-spacing:-.65px">DSC_0023.JPG</div>
<svg style="left:206px;top:240px;" width="16" height="15" viewBox="0 0 16 15"><path d="M3.500 .5h8l3 3v11h-11z" fill="#fff" stroke="#222"/><path d="M11.500 .5v3h3" fill="#ddd" stroke="#222" stroke-width=".8"/><rect x="0" y="4" width="14" height="8" fill="#5E5E08"/><rect x="0" y="4" width="14" height="8" fill="none" stroke="#3A3A00" stroke-width=".6"/><text x="1" y="10.500" font-size="6.500" font-weight="bold" font-family="Liberation Sans,sans-serif" fill="#F0E860" textLength="12" lengthAdjust="spacingAndGlyphs">JPG</text></svg>
<div class="ser" style="left:223px;top:241px;white-space:nowrap;font-size:12px;line-height:14px;letter-spacing:-.65px">DSC_0024.JPG</div>
<svg style="left:206px;top:256px;" width="16" height="15" viewBox="0 0 16 15"><path d="M3.500 .5h8l3 3v11h-11z" fill="#fff" stroke="#222"/><path d="M11.500 .5v3h3" fill="#ddd" stroke="#222" stroke-width=".8"/><rect x="0" y="4" width="14" height="8" fill="#5E5E08"/><rect x="0" y="4" width="14" height="8" fill="none" stroke="#3A3A00" stroke-width=".6"/><text x="1" y="10.500" font-size="6.500" font-weight="bold" font-family="Liberation Sans,sans-serif" fill="#F0E860" textLength="12" lengthAdjust="spacingAndGlyphs">JPG</text></svg>
<div class="ser" style="left:223px;top:257px;white-space:nowrap;font-size:12px;line-height:14px;letter-spacing:-.65px">DSC_0025.JPG</div>
<svg style="left:206px;top:272px;" width="16" height="15" viewBox="0 0 16 15"><path d="M3.500 .5h8l3 3v11h-11z" fill="#fff" stroke="#222"/><path d="M11.500 .5v3h3" fill="#ddd" stroke="#222" stroke-width=".8"/><rect x="0" y="4" width="14" height="8" fill="#5E5E08"/><rect x="0" y="4" width="14" height="8" fill="none" stroke="#3A3A00" stroke-width=".6"/><text x="1" y="10.500" font-size="6.500" font-weight="bold" font-family="Liberation Sans,sans-serif" fill="#F0E860" textLength="12" lengthAdjust="spacingAndGlyphs">JPG</text></svg>
<div class="ser" style="left:223px;top:273px;white-space:nowrap;font-size:12px;line-height:14px;letter-spacing:-.65px">DSC_0026.JPG</div>
<svg style="left:206px;top:288px;" width="16" height="15" viewBox="0 0 16 15"><path d="M3.500 .5h8l3 3v11h-11z" fill="#fff" stroke="#222"/><path d="M11.500 .5v3h3" fill="#ddd" stroke="#222" stroke-width=".8"/><rect x="0" y="4" width="14" height="8" fill="#5E5E08"/><rect x="0" y="4" width="14" height="8" fill="none" stroke="#3A3A00" stroke-width=".6"/><text x="1" y="10.500" font-size="6.500" font-weight="bold" font-family="Liberation Sans,sans-serif" fill="#F0E860" textLength="12" lengthAdjust="spacingAndGlyphs">JPG</text></svg>
<div class="ser" style="left:223px;top:289px;white-space:nowrap;font-size:12px;line-height:14px;letter-spacing:-.65px">DSC_0027.JPG</div>
<svg style="left:206px;top:304px;" width="16" height="15" viewBox="0 0 16 15"><path d="M3.500 .5h8l3 3v11h-11z" fill="#fff" stroke="#222"/><path d="M11.500 .5v3h3" fill="#ddd" stroke="#222" stroke-width=".8"/><rect x="0" y="4" width="14" height="8" fill="#5E5E08"/><rect x="0" y="4" width="14" height="8" fill="none" stroke="#3A3A00" stroke-width=".6"/><text x="1" y="10.500" font-size="6.500" font-weight="bold" font-family="Liberation Sans,sans-serif" fill="#F0E860" textLength="12" lengthAdjust="spacingAndGlyphs">JPG</text></svg>
<div class="ser" style="left:223px;top:305px;white-space:nowrap;font-size:12px;line-height:14px;letter-spacing:-.65px">DSC_0028.JPG</div>
<svg style="left:311px;top:96px;" width="16" height="15" viewBox="0 0 16 15"><path d="M3.500 .5h8l3 3v11h-11z" fill="#fff" stroke="#222"/><path d="M11.500 .5v3h3" fill="#ddd" stroke="#222" stroke-width=".8"/><rect x="0" y="4" width="14" height="8" fill="#5E5E08"/><rect x="0" y="4" width="14" height="8" fill="none" stroke="#3A3A00" stroke-width=".6"/><text x="1" y="10.500" font-size="6.500" font-weight="bold" font-family="Liberation Sans,sans-serif" fill="#F0E860" textLength="12" lengthAdjust="spacingAndGlyphs">JPG</text></svg>
<div class="ser" style="left:328px;top:97px;white-space:nowrap;font-size:12px;line-height:14px;letter-spacing:-.65px">DSC_0029.JPG</div>
<svg style="left:311px;top:112px;" width="16" height="15" viewBox="0 0 16 15"><path d="M3.500 .5h8l3 3v11h-11z" fill="#fff" stroke="#222"/><path d="M11.500 .5v3h3" fill="#ddd" stroke="#222" stroke-width=".8"/><rect x="0" y="4" width="14" height="8" fill="#5E5E08"/><rect x="0" y="4" width="14" height="8" fill="none" stroke="#3A3A00" stroke-width=".6"/><text x="1" y="10.500" font-size="6.500" font-weight="bold" font-family="Liberation Sans,sans-serif" fill="#F0E860" textLength="12" lengthAdjust="spacingAndGlyphs">JPG</text></svg>
<div class="ser" style="left:328px;top:113px;white-space:nowrap;font-size:12px;line-height:14px;letter-spacing:-.65px">DSC_0030.JPG</div>
<svg style="left:311px;top:128px;" width="16" height="15" viewBox="0 0 16 15"><path d="M3.500 .5h8l3 3v11h-11z" fill="#fff" stroke="#222"/><path d="M11.500 .5v3h3" fill="#ddd" stroke="#222" stroke-width=".8"/><rect x="0" y="4" width="14" height="8" fill="#5E5E08"/><rect x="0" y="4" width="14" height="8" fill="none" stroke="#3A3A00" stroke-width=".6"/><text x="1" y="10.500" font-size="6.500" font-weight="bold" font-family="Liberation Sans,sans-serif" fill="#F0E860" textLength="12" lengthAdjust="spacingAndGlyphs">JPG</text></svg>
<div class="ser" style="left:328px;top:129px;white-space:nowrap;font-size:12px;line-height:14px;letter-spacing:-.65px">DSC_0031.JPG</div>
<svg style="left:311px;top:144px;" width="16" height="15" viewBox="0 0 16 15"><path d="M3.500 .5h8l3 3v11h-11z" fill="#fff" stroke="#222"/><path d="M11.500 .5v3h3" fill="#ddd" stroke="#222" stroke-width=".8"/><rect x="0" y="4" width="14" height="8" fill="#5E5E08"/><rect x="0" y="4" width="14" height="8" fill="none" stroke="#3A3A00" stroke-width=".6"/><text x="1" y="10.500" font-size="6.500" font-weight="bold" font-family="Liberation Sans,sans-serif" fill="#F0E860" textLength="12" lengthAdjust="spacingAndGlyphs">JPG</text></svg>
<div class="ser" style="left:328px;top:145px;white-space:nowrap;font-size:12px;line-height:14px;letter-spacing:-.65px">DSC_0032.JPG</div>
<div class="ser" style="left:99px;top:347px;white-space:nowrap;font-size:11.500px;line-height:13px;letter-spacing:-0.22px">視訊: 1280x720x24, 24.000 fps 漸進的, 00:02:44;29, PICVideo MJPEG Codec</div>
<div class="ser" style="left:99px;top:359px;white-space:nowrap;font-size:11.500px;line-height:13px;letter-spacing:-0.22px">音訊: 11,025 Hz, 16 Bit, 單聲道, 00:02:44;29, Uncompressed</div>
<svg style="left:0px;top:376px;" width="465" height="19" viewBox="0 0 465 19"><defs><linearGradient id="tg" x1="0" x2="1"><stop offset="0" stop-color="#E4E1D4"/><stop offset=".5" stop-color="#D8D5C6"/><stop offset="1" stop-color="#C4C0B0"/></linearGradient></defs><rect x="3" y="0" width="461" height="18.5" fill="#BBB7A7"/><polygon points="5,0 68,0 62,16 12,16" fill="#ECE9D8"/><polygon points="3,0 5,0 12,16 3,16" fill="#B4B0A0"/><polygon points="68,0 120,0 115,16 62,16" fill="url(#tg)"/><polygon points="120,0 186,0 181,16 115,16" fill="url(#tg)"/><polygon points="186,0 263,0 257.5,16 181,16" fill="url(#tg)"/><polygon points="263,0 305.5,0 300.5,16 257.5,16" fill="url(#tg)"/><polygon points="305.5,0 370,0 365,16 300.5,16" fill="url(#tg)"/><polygon points="370,0 448,0 443,16 365,16" fill="url(#tg)"/><path d="M68.5 0L62.5 16" stroke="#F4F2EA" stroke-width="1.200"/><path d="M67.2 0L61.2 16" stroke="#A8A494" stroke-width="1"/><path d="M120.5 0L115.5 16" stroke="#F4F2EA" stroke-width="1.200"/><path d="M119.2 0L114.2 16" stroke="#A8A494" stroke-width="1"/><path d="M186.5 0L181.5 16" stroke="#F4F2EA" stroke-width="1.200"/><path d="M185.2 0L180.2 16" stroke="#A8A494" stroke-width="1"/><path d="M263.5 0L258.0 16" stroke="#F4F2EA" stroke-width="1.200"/><path d="M262.2 0L256.7 16" stroke="#A8A494" stroke-width="1"/><path d="M306.0 0L301.0 16" stroke="#F4F2EA" stroke-width="1.200"/><path d="M304.7 0L299.7 16" stroke="#A8A494" stroke-width="1"/><path d="M370.5 0L365.5 16" stroke="#F4F2EA" stroke-width="1.200"/><path d="M369.2 0L364.2 16" stroke="#A8A494" stroke-width="1"/><path d="M448.5 0L443.5 16" stroke="#F4F2EA" stroke-width="1.200"/><path d="M447.2 0L442.2 16" stroke="#A8A494" stroke-width="1"/><path d="M68 .5H464" stroke="#A09C8C"/><rect x="3" y="16" width="461" height="2.500" fill="#B2AE9E"/></svg>
<div class="sans" style="left:17px;top:378px;white-space:nowrap;font-size:11px;line-height:15px;font-weight:bold;">瀏覽器</div>
<div class="sans" style="left:72px;top:378px;white-space:nowrap;font-size:11px;line-height:15px;">修剪器</div>
<div class="sans" style="left:126px;top:378px;white-space:nowrap;font-size:11px;line-height:15px;">專案媒體</div>
<div class="sans" style="left:192px;top:378px;white-space:nowrap;font-size:11px;line-height:15px;">媒體管理者</div>
<div class="sans" style="left:269px;top:378px;white-space:nowrap;font-size:11px;line-height:15px;">轉場</div>
<div class="sans" style="left:311px;top:378px;white-space:nowrap;font-size:11px;line-height:15px;">視訊特效</div>
<div class="sans" style="left:377px;top:378px;white-space:nowrap;font-size:11px;line-height:15px;">媒體產生器</div>
<!-- gen_mixer -->
<div style="left:470px;top:69px;width:119px;height:1px;background:#fff"></div>
<div style="left:470px;top:70px;width:1px;height:329px;background:#fff"></div>
<div style="left:588px;top:70px;width:1px;height:329px;background:#ACA899"></div>
<div style="left:589px;top:70px;width:1px;height:329px;background:#fff"></div>
<svg style="left:475px;top:73px;" width="7" height="7" viewBox="0 0 7 7"><path d="M.8 .8l5.400 5.400M6.200 .8l-5.400 5.400" stroke="#333" stroke-width="1.500"/></svg>
<svg style="left:475px;top:85px;" width="7" height="8" viewBox="0 0 7 8"><path d="M5.500 0v7.500l-4.500-3.700z" fill="#333"/></svg>
<div style="left:476px;top:102px;width:3px;height:2px;background:#6E6C5E"></div>
<div style="left:477px;top:103px;width:2px;height:2px;background:#fff;z-index:-1"></div>
<div style="left:477px;top:103.0px;width:2px;height:2px;background:#fff;opacity:.0"></div>
<div style="left:476px;top:106px;width:3px;height:2px;background:#6E6C5E"></div>
<div style="left:477px;top:107px;width:2px;height:2px;background:#fff;z-index:-1"></div>
<div style="left:477px;top:107.5px;width:2px;height:2px;background:#fff;opacity:.0"></div>
<div style="left:476px;top:111px;width:3px;height:2px;background:#6E6C5E"></div>
<div style="left:477px;top:112px;width:2px;height:2px;background:#fff;z-index:-1"></div>
<div style="left:477px;top:112.0px;width:2px;height:2px;background:#fff;opacity:.0"></div>
<div style="left:476px;top:116px;width:3px;height:2px;background:#6E6C5E"></div>
<div style="left:477px;top:117px;width:2px;height:2px;background:#fff;z-index:-1"></div>
<div style="left:477px;top:116.5px;width:2px;height:2px;background:#fff;opacity:.0"></div>
<div style="left:476px;top:120px;width:3px;height:2px;background:#6E6C5E"></div>
<div style="left:477px;top:121px;width:2px;height:2px;background:#fff;z-index:-1"></div>
<div style="left:477px;top:121.0px;width:2px;height:2px;background:#fff;opacity:.0"></div>
<div style="left:476px;top:124px;width:3px;height:2px;background:#6E6C5E"></div>
<div style="left:477px;top:125px;width:2px;height:2px;background:#fff;z-index:-1"></div>
<div style="left:477px;top:125.5px;width:2px;height:2px;background:#fff;opacity:.0"></div>
<svg style="left:489px;top:74px;" width="13" height="15" viewBox="0 0 13 15"><rect x=".5" y=".5" width="12" height="14" fill="#C9D6F0" stroke="#6A7FB0"/><path d="M2.500 4h3M2.500 7h3M2.500 10h3" stroke="#445"/><path d="M6.500 3.500l5 4.500-2.300.3 1.300 2.700-1.200.6-1.300-2.700-1.500 1.500z" fill="#111"/></svg>
<svg style="left:513px;top:75px;" width="15" height="13" viewBox="0 0 15 13"><path d="M.5 .5v12l7-6zM14.500 .5v12l-7-6z" fill="#8A98B0" stroke="#4A5870"/></svg>
<svg style="left:538px;top:74px;" width="16" height="15" viewBox="0 0 16 15"><path d="M0 5h3l4-4v13l-4-4H0z" fill="#7A88A0" stroke="#4A5870" stroke-width=".8"/><path d="M12 1v11M9 9l3 4 3-4" stroke="#3A4860" stroke-width="1.600" fill="none"/></svg>
<svg style="left:563px;top:72px;" width="17" height="18" viewBox="0 0 17 18"><path d="M0 11.500h17" stroke="#2E9A7A" stroke-width="2"/><rect x="5.500" y="7" width="6" height="10" rx="1" fill="#3EAA8A" stroke="#1E7A5A"/><circle cx="1.500" cy="11.500" r="1.800" fill="#2E9A7A"/><circle cx="15.500" cy="11.500" r="1.800" fill="#2E9A7A"/><path d="M8.500 0v6M6 1.500l5 3M11 1.500l-5 3" stroke="#5ABA9A" stroke-width="1"/></svg>
<div style="left:486px;top:95px;width:99px;height:1px;background:#fff"></div>
<div style="left:489px;top:98px;width:20px;height:17px;background:#B4C0DC;border:1px solid #98A8CC;border-radius:2px"></div>
<svg style="left:493px;top:101px;" width="12" height="11" viewBox="0 0 12 11"><rect x="1" y="1" width="10" height="9" fill="#E4EAF6" stroke="#4A5A88" stroke-width="1.400"/><rect x="4" y="4" width="4" height="3" fill="none" stroke="#4A5A88"/></svg>
<div class="sans" style="left:513px;top:100px;white-space:nowrap;font-size:11px;line-height:13px">主要</div>
<svg style="left:490px;top:120px;" width="15" height="11" viewBox="0 0 15 11"><path d="M0 5.500h15" stroke="#7C94BC" stroke-width="1.800"/><rect x="5.500" y=".5" width="4" height="10" rx="1" fill="#A8BCDC" stroke="#7C94BC"/><circle cx="1.500" cy="5.500" r="1.600" fill="#7C94BC"/><circle cx="13.500" cy="5.500" r="1.600" fill="#7C94BC"/></svg>
<svg style="left:508px;top:118px;" width="15" height="15" viewBox="0 0 15 15"><g transform="translate(7.500 7.500)"><path d="M-1.800 -4L-1.200 -7.500L1.200 -7.500L1.800 -4z" fill="#8A5E78" transform="rotate(0)"/><path d="M-1.800 -4L-1.200 -7.500L1.200 -7.500L1.800 -4z" fill="#8A5E78" transform="rotate(45)"/><path d="M-1.800 -4L-1.200 -7.500L1.200 -7.500L1.800 -4z" fill="#8A5E78" transform="rotate(90)"/><path d="M-1.800 -4L-1.200 -7.500L1.200 -7.500L1.800 -4z" fill="#8A5E78" transform="rotate(135)"/><path d="M-1.800 -4L-1.200 -7.500L1.200 -7.500L1.800 -4z" fill="#8A5E78" transform="rotate(180)"/><path d="M-1.800 -4L-1.200 -7.500L1.200 -7.500L1.800 -4z" fill="#8A5E78" transform="rotate(225)"/><path d="M-1.800 -4L-1.200 -7.500L1.200 -7.500L1.800 -4z" fill="#8A5E78" transform="rotate(270)"/><path d="M-1.800 -4L-1.200 -7.500L1.200 -7.500L1.800 -4z" fill="#8A5E78" transform="rotate(315)"/><circle r="5.200" fill="#8A5E78"/><circle r="3.400" fill="#E484A8"/><circle r="1.700" fill="#6E3050"/></g></svg>
<svg style="left:527px;top:119px;" width="14" height="14" viewBox="0 0 14 14"><circle cx="7" cy="7" r="5.500" fill="#F0F2FC" stroke="#8090D0" stroke-width="2"/><path d="M3.200 3.200l7.600 7.600" stroke="#8090D0" stroke-width="2"/></svg>
<svg style="left:551px;top:118px;" width="5" height="15" viewBox="0 0 5 15"><path d="M.5 .5h4l-1 9.500h-2z" fill="#8474A8"/><circle cx="2.500" cy="12.800" r="1.800" fill="#8A6098"/></svg>
<div class="sans" style="left:529px;top:137px;white-space:nowrap;font-size:11px;line-height:13px;color:#222">-Inf.</div>
<div class="sans" style="left:560px;top:137px;white-space:nowrap;font-size:11px;line-height:13px;color:#222">-Inf.</div>
<div style="left:535px;top:151px;width:10px;height:210px;background:linear-gradient(to right,rgba(40,50,45,.35) 0,rgba(255,255,255,.12) 35%,rgba(255,255,255,.05) 65%,rgba(40,50,45,.3) 100%),linear-gradient(to bottom,#8E857B 0,#86887E 25px,#768E82 60px,#728C80 100%)"></div>
<div style="left:566px;top:151px;width:10px;height:210px;background:linear-gradient(to right,rgba(40,50,45,.35) 0,rgba(255,255,255,.12) 35%,rgba(255,255,255,.05) 65%,rgba(40,50,45,.3) 100%),linear-gradient(to bottom,#8E857B 0,#86887E 25px,#768E82 60px,#728C80 100%)"></div>
<div class="sans" style="left:547px;top:166.5px;width:17px;text-align:center;font-size:11px;line-height:13px;color:#222">6</div>
<div style="left:546px;top:174px;width:2px;height:1px;background:#444"></div>
<div style="left:563px;top:174px;width:2px;height:1px;background:#444"></div>
<div class="sans" style="left:547px;top:187.6px;width:17px;text-align:center;font-size:11px;line-height:13px;color:#222">12</div>
<div style="left:546px;top:195px;width:2px;height:1px;background:#444"></div>
<div style="left:563px;top:195px;width:2px;height:1px;background:#444"></div>
<div class="sans" style="left:547px;top:208.8px;width:17px;text-align:center;font-size:11px;line-height:13px;color:#222">18</div>
<div style="left:546px;top:216px;width:2px;height:1px;background:#444"></div>
<div style="left:563px;top:216px;width:2px;height:1px;background:#444"></div>
<div class="sans" style="left:547px;top:229.9px;width:17px;text-align:center;font-size:11px;line-height:13px;color:#222">24</div>
<div style="left:546px;top:237px;width:2px;height:1px;background:#444"></div>
<div style="left:563px;top:237px;width:2px;height:1px;background:#444"></div>
<div class="sans" style="left:547px;top:251.0px;width:17px;text-align:center;font-size:11px;line-height:13px;color:#222">30</div>
<div style="left:546px;top:258px;width:2px;height:1px;background:#444"></div>
<div style="left:563px;top:258px;width:2px;height:1px;background:#444"></div>
<div class="sans" style="left:547px;top:272.1px;width:17px;text-align:center;font-size:11px;line-height:13px;color:#222">36</div>
<div style="left:546px;top:279px;width:2px;height:1px;background:#444"></div>
<div style="left:563px;top:279px;width:2px;height:1px;background:#444"></div>
<div class="sans" style="left:547px;top:293.2px;width:17px;text-align:center;font-size:11px;line-height:13px;color:#222">42</div>
<div style="left:546px;top:300px;width:2px;height:1px;background:#444"></div>
<div style="left:563px;top:300px;width:2px;height:1px;background:#444"></div>
<div class="sans" style="left:547px;top:314.4px;width:17px;text-align:center;font-size:11px;line-height:13px;color:#222">48</div>
<div style="left:546px;top:321px;width:2px;height:1px;background:#444"></div>
<div style="left:563px;top:321px;width:2px;height:1px;background:#444"></div>
<div class="sans" style="left:547px;top:335.5px;width:17px;text-align:center;font-size:11px;line-height:13px;color:#222">54</div>
<div style="left:546px;top:342px;width:2px;height:1px;background:#444"></div>
<div style="left:563px;top:342px;width:2px;height:1px;background:#444"></div>
<div style="left:546px;top:158px;width:1px;height:1px;background:#777"></div>
<div style="left:564px;top:158px;width:1px;height:1px;background:#777"></div>
<div style="left:546px;top:165px;width:1px;height:1px;background:#777"></div>
<div style="left:564px;top:165px;width:1px;height:1px;background:#777"></div>
<div style="left:546px;top:172px;width:1px;height:1px;background:#777"></div>
<div style="left:564px;top:172px;width:1px;height:1px;background:#777"></div>
<div style="left:546px;top:179px;width:1px;height:1px;background:#777"></div>
<div style="left:564px;top:179px;width:1px;height:1px;background:#777"></div>
<div style="left:546px;top:186px;width:1px;height:1px;background:#777"></div>
<div style="left:564px;top:186px;width:1px;height:1px;background:#777"></div>
<div style="left:546px;top:193px;width:1px;height:1px;background:#777"></div>
<div style="left:564px;top:193px;width:1px;height:1px;background:#777"></div>
<div style="left:546px;top:200px;width:1px;height:1px;background:#777"></div>
<div style="left:564px;top:200px;width:1px;height:1px;background:#777"></div>
<div style="left:546px;top:207px;width:1px;height:1px;background:#777"></div>
<div style="left:564px;top:207px;width:1px;height:1px;background:#777"></div>
<div style="left:546px;top:214px;width:1px;height:1px;background:#777"></div>
<div style="left:564px;top:214px;width:1px;height:1px;background:#777"></div>
<div style="left:546px;top:221px;width:1px;height:1px;background:#777"></div>
<div style="left:564px;top:221px;width:1px;height:1px;background:#777"></div>
<div style="left:546px;top:228px;width:1px;height:1px;background:#777"></div>
<div style="left:564px;top:228px;width:1px;height:1px;background:#777"></div>
<div style="left:546px;top:236px;width:1px;height:1px;background:#777"></div>
<div style="left:564px;top:236px;width:1px;height:1px;background:#777"></div>
<div style="left:546px;top:243px;width:1px;height:1px;background:#777"></div>
<div style="left:564px;top:243px;width:1px;height:1px;background:#777"></div>
<div style="left:546px;top:250px;width:1px;height:1px;background:#777"></div>
<div style="left:564px;top:250px;width:1px;height:1px;background:#777"></div>
<div style="left:546px;top:257px;width:1px;height:1px;background:#777"></div>
<div style="left:564px;top:257px;width:1px;height:1px;background:#777"></div>
<div style="left:546px;top:264px;width:1px;height:1px;background:#777"></div>
<div style="left:564px;top:264px;width:1px;height:1px;background:#777"></div>
<div style="left:546px;top:271px;width:1px;height:1px;background:#777"></div>
<div style="left:564px;top:271px;width:1px;height:1px;background:#777"></div>
<div style="left:546px;top:278px;width:1px;height:1px;background:#777"></div>
<div style="left:564px;top:278px;width:1px;height:1px;background:#777"></div>
<div style="left:546px;top:285px;width:1px;height:1px;background:#777"></div>
<div style="left:564px;top:285px;width:1px;height:1px;background:#777"></div>
<div style="left:546px;top:292px;width:1px;height:1px;background:#777"></div>
<div style="left:564px;top:292px;width:1px;height:1px;background:#777"></div>
<div style="left:546px;top:299px;width:1px;height:1px;background:#777"></div>
<div style="left:564px;top:299px;width:1px;height:1px;background:#777"></div>
<div style="left:546px;top:306px;width:1px;height:1px;background:#777"></div>
<div style="left:564px;top:306px;width:1px;height:1px;background:#777"></div>
<div style="left:546px;top:313px;width:1px;height:1px;background:#777"></div>
<div style="left:564px;top:313px;width:1px;height:1px;background:#777"></div>
<div style="left:546px;top:320px;width:1px;height:1px;background:#777"></div>
<div style="left:564px;top:320px;width:1px;height:1px;background:#777"></div>
<div style="left:546px;top:327px;width:1px;height:1px;background:#777"></div>
<div style="left:564px;top:327px;width:1px;height:1px;background:#777"></div>
<div style="left:546px;top:334px;width:1px;height:1px;background:#777"></div>
<div style="left:564px;top:334px;width:1px;height:1px;background:#777"></div>
<div style="left:546px;top:341px;width:1px;height:1px;background:#777"></div>
<div style="left:564px;top:341px;width:1px;height:1px;background:#777"></div>
<div style="left:546px;top:348px;width:1px;height:1px;background:#777"></div>
<div style="left:564px;top:348px;width:1px;height:1px;background:#777"></div>
<div style="left:546px;top:355px;width:1px;height:1px;background:#777"></div>
<div style="left:564px;top:355px;width:1px;height:1px;background:#777"></div>
<div class="sans" style="left:532px;top:362px;white-space:nowrap;font-size:11px;line-height:13px;color:#222">0.0</div>
<div class="sans" style="left:563px;top:362px;white-space:nowrap;font-size:11px;line-height:13px;color:#222">0.0</div>
<div style="left:506px;top:159px;width:1px;height:188px;background:#9A988C"></div>
<div style="left:507px;top:159px;width:1px;height:188px;background:#fff"></div>
<div style="left:495px;top:218px;width:24px;height:18px;background:linear-gradient(#E4EAF8,#B8C4E0);border:1px solid #8A98B8;border-radius:2px"></div>
<div style="left:506px;top:219px;width:1px;height:16px;background:#8A98B8"></div>
<div style="left:499px;top:224px;width:5px;height:1px;background:#7080A0"></div>
<div style="left:509px;top:224px;width:5px;height:1px;background:#7080A0"></div>
<div style="left:499px;top:226px;width:5px;height:1px;background:#7080A0"></div>
<div style="left:509px;top:226px;width:5px;height:1px;background:#7080A0"></div>
<div style="left:499px;top:228px;width:5px;height:1px;background:#7080A0"></div>
<div style="left:509px;top:228px;width:5px;height:1px;background:#7080A0"></div>
<svg style="left:502px;top:361px;" width="9" height="10" viewBox="0 0 9 10"><rect x=".5" y="4" width="8" height="6" rx="1" fill="#9AA0A8" stroke="#6A707A"/><path d="M2.500 4V2.500a2 2 0 014 0V4" stroke="#6A707A" fill="none" stroke-width="1.200"/></svg>
<div style="left:484px;top:376px;width:101px;height:1px;background:#C5C2B0"></div>
<div style="left:484px;top:377px;width:101px;height:1px;background:#fff"></div>
<div style="left:486px;top:381px;width:98px;height:15px;background:#F3F2EC"></div>
<div style="left:486px;top:381px;width:15px;height:15px;background:linear-gradient(to right,#D2E0FE,#B8CCFA);border:1px solid #fff;border-radius:2px;box-shadow:inset 0 0 0 1px #B0C4F4"></div>
<svg style="left:486px;top:381px;" width="15" height="15" viewBox="0 0 15 15"><path d="M9.0 4.0L5.5 7.5L9.0 11.0" stroke="#4D6185" stroke-width="2" fill="none"/></svg>
<div style="left:569px;top:381px;width:15px;height:15px;background:linear-gradient(to right,#D2E0FE,#B8CCFA);border:1px solid #fff;border-radius:2px;box-shadow:inset 0 0 0 1px #B0C4F4"></div>
<svg style="left:569px;top:381px;" width="15" height="15" viewBox="0 0 15 15"><path d="M6.0 4.0L9.5 7.5L6.0 11.0" stroke="#4D6185" stroke-width="2" fill="none"/></svg>
<div style="left:502px;top:381px;width:66px;height:15px;background:linear-gradient(#CCDAFE,#B8CAF8);border:1px solid #fff;border-radius:2px"></div>
<!-- gen_preview -->
<div style="left:594px;top:69px;width:364px;height:1px;background:#F6F4EA"></div>
<div style="left:957px;top:69px;width:1px;height:330px;background:#FBFAF2"></div>
<div style="left:594px;top:70px;width:1px;height:329px;background:#fff"></div>
<svg style="left:599px;top:73px;" width="7" height="7" viewBox="0 0 7 7"><path d="M.8 .8l5.400 5.400M6.200 .8l-5.400 5.400" stroke="#333" stroke-width="1.500"/></svg>
<svg style="left:599px;top:85px;" width="7" height="8" viewBox="0 0 7 8"><path d="M5.500 0v7.500l-4.500-3.700z" fill="#333"/></svg>
<div style="left:600px;top:102px;width:3px;height:2px;background:#6E6C5E"></div>
<div style="left:601px;top:103px;width:2px;height:2px;background:#fff;z-index:-1"></div>
<div style="left:601px;top:103.0px;width:2px;height:2px;background:#fff;opacity:.0"></div>
<div style="left:600px;top:106px;width:3px;height:2px;background:#6E6C5E"></div>
<div style="left:601px;top:107px;width:2px;height:2px;background:#fff;z-index:-1"></div>
<div style="left:601px;top:107.5px;width:2px;height:2px;background:#fff;opacity:.0"></div>
<div style="left:600px;top:111px;width:3px;height:2px;background:#6E6C5E"></div>
<div style="left:601px;top:112px;width:2px;height:2px;background:#fff;z-index:-1"></div>
<div style="left:601px;top:112.0px;width:2px;height:2px;background:#fff;opacity:.0"></div>
<div style="left:600px;top:116px;width:3px;height:2px;background:#6E6C5E"></div>
<div style="left:601px;top:117px;width:2px;height:2px;background:#fff;z-index:-1"></div>
<div style="left:601px;top:116.5px;width:2px;height:2px;background:#fff;opacity:.0"></div>
<div style="left:600px;top:120px;width:3px;height:2px;background:#6E6C5E"></div>
<div style="left:601px;top:121px;width:2px;height:2px;background:#fff;z-index:-1"></div>
<div style="left:601px;top:121.0px;width:2px;height:2px;background:#fff;opacity:.0"></div>
<div style="left:600px;top:124px;width:3px;height:2px;background:#6E6C5E"></div>
<div style="left:601px;top:125px;width:2px;height:2px;background:#fff;z-index:-1"></div>
<div style="left:601px;top:125.5px;width:2px;height:2px;background:#fff;opacity:.0"></div>
<svg style="left:613px;top:74px;" width="13" height="15" viewBox="0 0 13 15"><rect x=".5" y=".5" width="12" height="14" fill="#C9D6F0" stroke="#6A7FB0"/><path d="M2.500 4h3M2.500 7h3M2.500 10h3" stroke="#445"/><path d="M6.500 3.500l5 4.500-2.300.3 1.300 2.700-1.200.6-1.300-2.700-1.500 1.500z" fill="#111"/></svg>
<div style="left:632px;top:72px;width:1px;height:19px;background:#C5C2B0"></div>
<div style="left:633px;top:72px;width:1px;height:19px;background:#fff"></div>
<svg style="left:642px;top:73px;" width="16" height="17" viewBox="0 0 16 17"><rect x=".5" y=".5" width="15" height="12" rx="1.500" fill="#8A98B8" stroke="#5A6888"/><rect x="2.500" y="2.500" width="11" height="8" fill="#BEE4F0"/><path d="M5 15.500h6M8 13v2" stroke="#5A6888" stroke-width="1.600"/></svg>
<div style="left:664px;top:72px;width:1px;height:19px;background:#C5C2B0"></div>
<div style="left:665px;top:72px;width:1px;height:19px;background:#fff"></div>
<svg style="left:672px;top:76px;" width="15" height="11" viewBox="0 0 15 11"><path d="M0 5.500h15" stroke="#7C94BC" stroke-width="1.800"/><rect x="5.500" y=".5" width="4" height="10" rx="1" fill="#A8BCDC" stroke="#7C94BC"/><circle cx="1.500" cy="5.500" r="1.600" fill="#7C94BC"/><circle cx="13.500" cy="5.500" r="1.600" fill="#7C94BC"/></svg>
<div style="left:693px;top:71px;width:27px;height:21px;background:#fff;border:1px solid #98B5E2;border-radius:3px"></div>
<svg style="left:698px;top:74px;" width="16" height="15" viewBox="0 0 16 15"><rect x=".5" y=".5" width="15" height="14" fill="#C0CCEC" stroke="#4A5AA0"/><circle cx="8" cy="7.500" r="5" fill="#22348A"/></svg>
<svg style="left:722px;top:80px;" width="6" height="4" viewBox="0 0 6 4"><path d="M0 .3h6l-3 3.200z" fill="#000"/></svg>
<div class="sans" style="left:733px;top:74px;white-space:nowrap;font-size:12px;line-height:15px">預覽 (自動)</div>
<svg style="left:796px;top:80px;" width="6" height="4" viewBox="0 0 6 4"><path d="M0 .3h6l-3 3.200z" fill="#000"/></svg>
<svg style="left:815px;top:75px;" width="14" height="13" viewBox="0 0 14 13"><path d="M4.500 0v13M9.500 0v13M0 4.500h14M0 8.500h14" stroke="#9CA0D8" stroke-width="1.200"/></svg>
<svg style="left:836px;top:80px;" width="6" height="4" viewBox="0 0 6 4"><path d="M0 .3h6l-3 3.200z" fill="#000"/></svg>
<div style="left:850px;top:72px;width:1px;height:19px;background:#C5C2B0"></div>
<div style="left:851px;top:72px;width:1px;height:19px;background:#fff"></div>
<svg style="left:857px;top:74px;" width="15" height="16" viewBox="0 0 15 16"><rect x=".5" y=".5" width="9" height="10" rx="1" fill="#D8E0F4" stroke="#6A7AA8"/><rect x="5.500" y="5.500" width="9" height="10" rx="1" fill="#E8ECF8" stroke="#6A7AA8"/><path d="M7.500 8.500h5M7.500 11h5" stroke="#8A98B8"/></svg>
<svg style="left:880px;top:74px;" width="14" height="15" viewBox="0 0 14 15"><rect x=".5" y=".5" width="13" height="14" rx="1" fill="#3A4668" stroke="#262E4A"/><rect x="2.500" y="1" width="9" height="6" fill="#E6EAF4"/><rect x="3.500" y="10" width="7" height="4.500" fill="#111"/><rect x="7.500" y="11" width="2" height="3" fill="#ddd"/></svg>
<div style="left:631px;top:146px;width:300px;height:169px;background:#000"></div>
<div style="left:608px;top:367px;width:345px;height:1px;background:#C5C2B0"></div>
<div style="left:608px;top:368px;width:345px;height:1px;background:#fff"></div>
<div class="sans" style="left:608px;top:370px;white-space:nowrap;font-size:11px;line-height:13px;letter-spacing:.42px">專案: 1920x1080x32, 29.970i</div>
<div class="sans" style="left:780px;top:370px;white-space:nowrap;font-size:11px;line-height:13px;letter-spacing:.42px">畫格: 523</div>
<div class="sans" style="left:608px;top:383px;white-space:nowrap;font-size:11px;line-height:13px;letter-spacing:.42px">預覽: <span style="color:#8B1A1A">480x270x32, 29.970p</span></div>
<div class="sans" style="left:780px;top:383px;white-space:nowrap;font-size:11px;line-height:13px;letter-spacing:.42px">顯示: <span style="color:#8B1A1A">320x180x32</span></div>
<!-- gen_timeline -->
<div style="left:0px;top:399px;width:960px;height:1px;background:#D0CCBC"></div>
<div style="left:0px;top:400px;width:960px;height:4px;background:#F2EDE0"></div>
<div style="left:8px;top:407px;width:3px;height:2px;background:#6E6C5E"></div>
<div style="left:9px;top:408px;width:2px;height:2px;background:#fff;z-index:-1"></div>
<div style="left:9px;top:408.0px;width:2px;height:2px;background:#fff;opacity:.0"></div>
<div style="left:8px;top:412px;width:3px;height:2px;background:#6E6C5E"></div>
<div style="left:9px;top:413px;width:2px;height:2px;background:#fff;z-index:-1"></div>
<div style="left:9px;top:412.5px;width:2px;height:2px;background:#fff;opacity:.0"></div>
<div style="left:8px;top:416px;width:3px;height:2px;background:#6E6C5E"></div>
<div style="left:9px;top:417px;width:2px;height:2px;background:#fff;z-index:-1"></div>
<div style="left:9px;top:417.0px;width:2px;height:2px;background:#fff;opacity:.0"></div>
<div style="left:8px;top:420px;width:3px;height:2px;background:#6E6C5E"></div>
<div style="left:9px;top:421px;width:2px;height:2px;background:#fff;z-index:-1"></div>
<div style="left:9px;top:421.5px;width:2px;height:2px;background:#fff;opacity:.0"></div>
<div style="left:8px;top:425px;width:3px;height:2px;background:#6E6C5E"></div>
<div style="left:9px;top:426px;width:2px;height:2px;background:#fff;z-index:-1"></div>
<div style="left:9px;top:426.0px;width:2px;height:2px;background:#fff;opacity:.0"></div>
<div style="left:8px;top:430px;width:3px;height:2px;background:#6E6C5E"></div>
<div style="left:9px;top:431px;width:2px;height:2px;background:#fff;z-index:-1"></div>
<div style="left:9px;top:430.5px;width:2px;height:2px;background:#fff;opacity:.0"></div>
<div class="sans" style="left:79px;top:413px;white-space:nowrap;font-size:20px;line-height:24px;color:#7C7A70;letter-spacing:-0.45px">00:00:17;13</div>
<div style="left:189px;top:401px;width:1px;height:227px;background:#C4C0B0"></div>
<div style="left:194px;top:404px;width:748px;height:4px;background:#3B5F95;border-top:1px solid #CFE4FF;border-bottom:1px solid #CFE4FF"></div>
<svg style="left:190px;top:402px;" width="8" height="8" viewBox="0 0 8 8"><path d="M.8 0v8" stroke="#3B5F95" stroke-width="1.200"/><path d="M1.800 4L6 1.200v5.600z" fill="#3B5F95"/></svg>
<div style="left:229px;top:402px;width:32px;height:13px;background:#FFFFF4;border:1px solid #000;border-radius:1px"></div>
<div class="sans" style="left:229px;top:402px;width:32px;text-align:center;font-size:11px;line-height:13px">-7;21</div>
<div style="left:944px;top:402px;width:13px;height:13px;background:#C8D6F8;border:1px solid #fff;box-shadow:0 0 0 1px #A8BCE8"></div>
<svg style="left:946px;top:404px;" width="9" height="10" viewBox="0 0 9 10"><path d="M1.500 0v10" stroke="#112" stroke-width="2"/><rect x="2" y="1" width="6" height="5" fill="none" stroke="#112" stroke-width="1.800"/></svg>
<svg style="left:191px;top:423px;" width="9" height="9" viewBox="0 0 9 9"><path d="M1 8L1.500 1.500L8 1.300z" fill="#F0E818" stroke="#E0D400" stroke-width=".6"/></svg>
<div style="left:190px;top:430px;width:752px;height:1px;background:#B8B4A4"></div>
<div class="sans" style="left:191px;top:434px;white-space:nowrap;font-size:11px;line-height:12px;color:#111;max-width:750px;overflow:hidden">00:00:00;00</div>
<div class="sans" style="left:330px;top:434px;white-space:nowrap;font-size:11px;line-height:12px;color:#111;max-width:611px;overflow:hidden">00:00:00;10</div>
<div style="left:329px;top:441px;width:1px;height:8px;background:#222"></div>
<div class="sans" style="left:469px;top:434px;white-space:nowrap;font-size:11px;line-height:12px;color:#111;max-width:472px;overflow:hidden">00:00:00;20</div>
<div style="left:468px;top:441px;width:1px;height:8px;background:#222"></div>
<div class="sans" style="left:608px;top:434px;white-space:nowrap;font-size:11px;line-height:12px;color:#111;max-width:333px;overflow:hidden">00:00:01;00</div>
<div style="left:607px;top:441px;width:1px;height:8px;background:#222"></div>
<div class="sans" style="left:747px;top:434px;white-space:nowrap;font-size:11px;line-height:12px;color:#111;max-width:194px;overflow:hidden">00:00:01;10</div>
<div style="left:746px;top:441px;width:1px;height:8px;background:#222"></div>
<div class="sans" style="left:887px;top:434px;white-space:nowrap;font-size:11px;line-height:12px;color:#111;max-width:54px;overflow:hidden">00:00:01;20</div>
<div style="left:886px;top:441px;width:1px;height:8px;background:#222"></div>
<div style="left:190px;top:446px;width:1px;height:3px;background:#333"></div>
<div style="left:204px;top:446px;width:1px;height:3px;background:#333"></div>
<div style="left:218px;top:446px;width:1px;height:3px;background:#333"></div>
<div style="left:232px;top:446px;width:1px;height:3px;background:#333"></div>
<div style="left:246px;top:446px;width:1px;height:3px;background:#333"></div>
<div style="left:260px;top:446px;width:1px;height:3px;background:#333"></div>
<div style="left:274px;top:446px;width:1px;height:3px;background:#333"></div>
<div style="left:287px;top:446px;width:1px;height:3px;background:#333"></div>
<div style="left:301px;top:446px;width:1px;height:3px;background:#333"></div>
<div style="left:315px;top:446px;width:1px;height:3px;background:#333"></div>
<div style="left:329px;top:446px;width:1px;height:3px;background:#333"></div>
<div style="left:343px;top:446px;width:1px;height:3px;background:#333"></div>
<div style="left:357px;top:446px;width:1px;height:3px;background:#333"></div>
<div style="left:371px;top:446px;width:1px;height:3px;background:#333"></div>
<div style="left:385px;top:446px;width:1px;height:3px;background:#333"></div>
<div style="left:399px;top:446px;width:1px;height:3px;background:#333"></div>
<div style="left:413px;top:446px;width:1px;height:3px;background:#333"></div>
<div style="left:427px;top:446px;width:1px;height:3px;background:#333"></div>
<div style="left:441px;top:446px;width:1px;height:3px;background:#333"></div>
<div style="left:454px;top:446px;width:1px;height:3px;background:#333"></div>
<div style="left:468px;top:446px;width:1px;height:3px;background:#333"></div>
<div style="left:482px;top:446px;width:1px;height:3px;background:#333"></div>
<div style="left:496px;top:446px;width:1px;height:3px;background:#333"></div>
<div style="left:510px;top:446px;width:1px;height:3px;background:#333"></div>
<div style="left:524px;top:446px;width:1px;height:3px;background:#333"></div>
<div style="left:538px;top:446px;width:1px;height:3px;background:#333"></div>
<div style="left:552px;top:446px;width:1px;height:3px;background:#333"></div>
<div style="left:566px;top:446px;width:1px;height:3px;background:#333"></div>
<div style="left:580px;top:446px;width:1px;height:3px;background:#333"></div>
<div style="left:594px;top:446px;width:1px;height:3px;background:#333"></div>
<div style="left:608px;top:446px;width:1px;height:3px;background:#333"></div>
<div style="left:622px;top:446px;width:1px;height:3px;background:#333"></div>
<div style="left:635px;top:446px;width:1px;height:3px;background:#333"></div>
<div style="left:649px;top:446px;width:1px;height:3px;background:#333"></div>
<div style="left:663px;top:446px;width:1px;height:3px;background:#333"></div>
<div style="left:677px;top:446px;width:1px;height:3px;background:#333"></div>
<div style="left:691px;top:446px;width:1px;height:3px;background:#333"></div>
<div style="left:705px;top:446px;width:1px;height:3px;background:#333"></div>
<div style="left:719px;top:446px;width:1px;height:3px;background:#333"></div>
<div style="left:733px;top:446px;width:1px;height:3px;background:#333"></div>
<div style="left:747px;top:446px;width:1px;height:3px;background:#333"></div>
<div style="left:761px;top:446px;width:1px;height:3px;background:#333"></div>
<div style="left:775px;top:446px;width:1px;height:3px;background:#333"></div>
<div style="left:789px;top:446px;width:1px;height:3px;background:#333"></div>
<div style="left:802px;top:446px;width:1px;height:3px;background:#333"></div>
<div style="left:816px;top:446px;width:1px;height:3px;background:#333"></div>
<div style="left:830px;top:446px;width:1px;height:3px;background:#333"></div>
<div style="left:844px;top:446px;width:1px;height:3px;background:#333"></div>
<div style="left:858px;top:446px;width:1px;height:3px;background:#333"></div>
<div style="left:872px;top:446px;width:1px;height:3px;background:#333"></div>
<div style="left:886px;top:446px;width:1px;height:3px;background:#333"></div>
<div style="left:900px;top:446px;width:1px;height:3px;background:#333"></div>
<div style="left:914px;top:446px;width:1px;height:3px;background:#333"></div>
<div style="left:928px;top:446px;width:1px;height:3px;background:#333"></div>
<div style="left:190px;top:449px;width:752px;height:1px;background:#DCD8C8"></div>
<div style="left:3px;top:448px;width:182px;height:60px;background:#B4C6DA;border-top:1px solid #9C9C94;border-left:1px solid #9C9C94;border-bottom:1px solid #7C8494;border-right:1px solid #98A4B8"></div>
<svg style="left:7px;top:452px;" width="13" height="15" viewBox="0 0 13 15"><rect x="0" y="0" width="13" height="7" rx="1.500" fill="#8496C2"/><rect x="0" y="8" width="13" height="7" rx="1.500" fill="#8496C2"/><path d="M2.500 3.500h8M2.500 11.500h8" stroke="#F4F6FC" stroke-width="2"/></svg>
<div style="left:22px;top:452px;width:24px;height:16px;background:#8494C0;border:1px solid #A8B4D4;border-radius:2px"></div>
<div style="left:24px;top:454px;width:4px;height:4px;background:#fff"></div>
<div class="sans" style="left:37px;top:453px;white-space:nowrap;font-size:13px;line-height:14px;color:#fff">1</div>
<svg style="left:73px;top:455px;" width="12" height="11" viewBox="0 0 12 11"><ellipse cx="6" cy="5.500" rx="5" ry="4" fill="none" stroke="#8090C8" stroke-width="1.800"/><path d="M2 9.500L10 1.500" stroke="#8090C8" stroke-width="1.600"/></svg>
<svg style="left:94px;top:456px;" width="17" height="10" viewBox="0 0 17 10"><path d="M0 5h17" stroke="#2E9A7A" stroke-width="2"/><rect x="5.500" y=".5" width="6" height="9" rx="1" fill="#3EAA8A" stroke="#1E7A5A"/><circle cx="1.800" cy="5" r="1.800" fill="#2E9A7A"/><circle cx="15.200" cy="5" r="1.800" fill="#2E9A7A"/></svg>
<svg style="left:113px;top:458px;" width="6" height="4" viewBox="0 0 6 4"><path d="M0 .3h6l-3 3.200z" fill="#222"/></svg>
<svg style="left:122px;top:452px;" width="15" height="15" viewBox="0 0 15 15"><g transform="translate(7.500 7.500)"><path d="M-1.800 -4L-1.200 -7.500L1.200 -7.500L1.800 -4z" fill="#8A5E78" transform="rotate(0)"/><path d="M-1.800 -4L-1.200 -7.500L1.200 -7.500L1.800 -4z" fill="#8A5E78" transform="rotate(45)"/><path d="M-1.800 -4L-1.200 -7.500L1.200 -7.500L1.800 -4z" fill="#8A5E78" transform="rotate(90)"/><path d="M-1.800 -4L-1.200 -7.500L1.200 -7.500L1.800 -4z" fill="#8A5E78" transform="rotate(135)"/><path d="M-1.800 -4L-1.200 -7.500L1.200 -7.500L1.800 -4z" fill="#8A5E78" transform="rotate(180)"/><path d="M-1.800 -4L-1.200 -7.500L1.200 -7.500L1.800 -4z" fill="#8A5E78" transform="rotate(225)"/><path d="M-1.800 -4L-1.200 -7.500L1.200 -7.500L1.800 -4z" fill="#8A5E78" transform="rotate(270)"/><path d="M-1.800 -4L-1.200 -7.500L1.200 -7.500L1.800 -4z" fill="#8A5E78" transform="rotate(315)"/><circle r="5.200" fill="#8A5E78"/><circle r="3.400" fill="#E484A8"/><circle r="1.700" fill="#6E3050"/></g></svg>
<svg style="left:145px;top:453px;" width="14" height="14" viewBox="0 0 14 14"><circle cx="7" cy="7" r="5.500" fill="#F0F2FC" stroke="#8090D0" stroke-width="2"/><path d="M3.200 3.200l7.600 7.600" stroke="#8090D0" stroke-width="2"/></svg>
<svg style="left:168px;top:452px;" width="5" height="15" viewBox="0 0 5 15"><path d="M.5 .5h4l-1 9.500h-2z" fill="#8474A8"/><circle cx="2.500" cy="12.800" r="1.800" fill="#8A6098"/></svg>
<div class="sans" style="left:25px;top:474px;white-space:nowrap;font-size:11px;line-height:13px;color:#111;letter-spacing:.2px">音量:</div>
<div class="sans" style="left:66px;top:474px;white-space:nowrap;font-size:11px;line-height:13px;color:#111;letter-spacing:.45px">0.0 dB</div>
<div style="left:110px;top:479px;width:60px;height:1px;background:#8A96AC"></div>
<div style="left:110px;top:480px;width:60px;height:1px;background:#fff"></div>
<div style="left:140px;top:473px;width:18px;height:14px;background:linear-gradient(#F4F6FA,#C4CCDC);border:1px solid #8A94A8;border-radius:3px"></div>
<div style="left:146px;top:477px;width:1px;height:6px;background:#6A7488"></div>
<div style="left:148px;top:477px;width:1px;height:6px;background:#6A7488"></div>
<div style="left:150px;top:477px;width:1px;height:6px;background:#6A7488"></div>
<div class="sans" style="left:25px;top:491px;white-space:nowrap;font-size:11px;line-height:13px;color:#111;letter-spacing:.2px">音場:</div>
<div class="sans" style="left:78px;top:491px;white-space:nowrap;font-size:11px;line-height:13px;color:#111">中央</div>
<div style="left:112px;top:496px;width:58px;height:1px;background:#8A96AC"></div>
<div style="left:112px;top:497px;width:58px;height:1px;background:#fff"></div>
<div style="left:131px;top:490px;width:18px;height:14px;background:linear-gradient(#F4F6FA,#C4CCDC);border:1px solid #8A94A8;border-radius:3px"></div>
<div style="left:137px;top:494px;width:1px;height:6px;background:#6A7488"></div>
<div style="left:139px;top:494px;width:1px;height:6px;background:#6A7488"></div>
<div style="left:141px;top:494px;width:1px;height:6px;background:#6A7488"></div>
<div style="left:3px;top:508px;width:183px;height:119px;border:1px solid #C8C4B4;border-top:none;border-left-color:#A8A494"></div>
<div style="left:190px;top:450px;width:752px;height:58px;background:#ECE9D8"></div>
<div style="left:190px;top:508px;width:752px;height:120px;background:#CCC8B8"></div>
<div style="left:190px;top:506px;width:752px;height:2px;background:#F6F4EA"></div>
<div style="left:190px;top:451px;width:418px;height:55px;background:#677AA2;border:1px solid #55668C;border-top-color:#5E7098"></div>
<div style="left:191px;top:478px;width:416px;height:1px;background:#AEBBD8"></div>
<svg style="left:190px;top:450px;" width="418" height="57" viewBox="0 0 418 57"><path d="M215 28.0 L216 27.8 L217 27.9 L218 28.1 L219 28.1 L220 28.1 L221 27.9 L222 28.0 L223 27.8 L224 27.8 L225 27.6 L226 27.6 L227 28.0 L228 27.9 L229 28.0 L230 27.7 L231 27.7 L232 28.0 L233 27.6 L234 27.9 L235 27.8 L236 27.5 L237 27.9 L238 27.7 L239 27.6 L240 27.4 L241 27.7 L242 27.9 L243 28.0 L244 27.5 L245 27.4 L246 27.5 L247 27.6 L248 27.4 L249 27.6 L250 27.9 L251 27.5 L252 27.4 L253 27.7 L254 27.9 L255 27.8 L256 27.9 L257 27.8 L258 27.6 L259 27.9 L260 27.5 L261 27.3 L262 27.7 L263 27.6 L264 27.1 L265 27.8 L266 27.7 L267 27.4 L268 27.9 L269 27.6 L270 27.0 L271 27.4 L272 27.3 L273 27.1 L274 27.1 L275 27.5 L276 27.8 L277 27.8 L278 27.6 L279 27.5 L280 27.8 L281 27.7 L282 27.8 L283 27.2 L284 27.6 L285 27.4 L286 27.0 L287 27.3 L288 27.7 L289 27.4 L290 26.9 L291 27.8 L292 27.2 L293 27.2 L294 27.2 L295 26.9 L296 27.5 L297 27.6 L298 27.2 L299 27.4 L300 26.9 L301 26.8 L302 26.8 L303 27.5 L304 27.3 L305 27.7 L306 27.4 L307 26.6 L308 26.6 L309 26.6 L310 27.4 L311 27.4 L312 26.9 L313 26.7 L314 26.9 L315 27.6 L316 26.6 L317 26.7 L318 27.4 L319 27.2 L320 26.4 L321 27.1 L322 26.7 L323 27.5 L324 26.5 L325 27.4 L326 26.4 L327 27.2 L328 27.4 L329 26.3 L330 26.9 L331 27.0 L332 26.5 L333 27.2 L334 27.2 L335 27.2 L336 27.4 L337 27.1 L338 26.8 L339 27.0 L340 26.9 L341 26.8 L342 26.9 L343 27.5 L344 27.3 L345 26.5 L346 27.0 L347 26.7 L348 27.3 L349 27.1 L350 26.4 L351 26.7 L352 26.2 L353 26.6 L354 25.9 L355 26.0 L356 25.9 L357 25.4 L358 24.9 L359 25.7 L360 25.1 L361 26.7 L362 26.8 L363 26.8 L364 25.2 L365 26.6 L366 25.4 L367 26.0 L368 27.1 L369 26.8 L370 25.8 L371 27.1 L372 26.6 L373 27.1 L374 26.2 L375 26.5 L376 27.3 L377 26.3 L378 27.2 L379 26.1 L380 27.2 L381 27.3 L382 26.9 L383 26.6 L384 26.0 L385 27.1 L386 26.3 L387 27.1 L388 26.1 L389 27.2 L390 26.2 L391 27.1 L392 27.2 L393 26.5 L394 26.3 L395 26.8 L396 26.3 L397 27.1 L398 27.2 L399 26.7 L400 25.9 L401 26.3 L402 26.6 L403 26.8 L404 25.9 L405 26.9 L406 25.5 L407 25.7 L408 26.3 L409 26.5 L410 25.9 L411 26.5 L412 25.9 L413 26.4 L414 27.1 L415 27.0 L416 26.7 L416 30.2 L415 31.2 L414 30.1 L413 30.5 L412 31.0 L411 31.4 L410 31.6 L409 30.7 L408 31.3 L407 30.6 L406 30.0 L405 30.6 L404 30.8 L403 29.8 L402 29.8 L401 30.1 L400 30.3 L399 30.3 L398 30.1 L397 30.0 L396 30.2 L395 30.0 L394 31.3 L393 30.3 L392 31.2 L391 31.2 L390 31.1 L389 31.3 L388 30.4 L387 29.8 L386 30.9 L385 31.2 L384 30.1 L383 31.2 L382 29.9 L381 30.9 L380 30.1 L379 31.2 L378 31.3 L377 30.5 L376 30.2 L375 30.3 L374 29.7 L373 30.1 L372 30.2 L371 30.3 L370 30.9 L369 30.4 L368 31.1 L367 31.1 L366 30.4 L365 31.7 L364 32.1 L363 31.6 L362 30.6 L361 31.0 L360 30.4 L359 32.1 L358 30.6 L357 32.0 L356 32.1 L355 31.2 L354 31.5 L353 30.3 L352 30.2 L351 30.6 L350 30.2 L349 29.9 L348 30.3 L347 30.6 L346 30.2 L345 30.3 L344 30.1 L343 30.6 L342 29.7 L341 29.5 L340 30.2 L339 30.7 L338 30.7 L337 30.1 L336 30.7 L335 30.0 L334 30.2 L333 29.8 L332 29.7 L331 30.6 L330 30.6 L329 30.2 L328 29.4 L327 30.1 L326 30.2 L325 30.4 L324 30.4 L323 29.6 L322 29.6 L321 30.5 L320 29.9 L319 30.3 L318 30.3 L317 29.9 L316 30.3 L315 30.1 L314 30.3 L313 29.9 L312 30.4 L311 29.6 L310 29.6 L309 29.7 L308 30.4 L307 29.8 L306 30.1 L305 29.6 L304 29.3 L303 29.9 L302 30.1 L301 30.2 L300 30.3 L299 29.5 L298 30.1 L297 30.1 L296 29.6 L295 30.0 L294 30.3 L293 29.3 L292 29.4 L291 30.2 L290 29.4 L289 29.5 L288 29.3 L287 29.7 L286 30.2 L285 29.3 L284 29.5 L283 29.3 L282 30.0 L281 29.5 L280 29.3 L279 29.2 L278 29.3 L277 29.2 L276 29.7 L275 29.5 L274 29.9 L273 29.8 L272 29.2 L271 29.7 L270 29.7 L269 29.6 L268 29.5 L267 29.3 L266 29.5 L265 29.3 L264 29.2 L263 29.8 L262 29.4 L261 29.8 L260 29.8 L259 29.4 L258 29.7 L257 29.3 L256 29.6 L255 29.1 L254 29.4 L253 29.5 L252 29.2 L251 29.8 L250 29.5 L249 29.5 L248 29.7 L247 29.3 L246 29.4 L245 29.2 L244 29.4 L243 29.4 L242 29.3 L241 29.5 L240 29.1 L239 29.2 L238 29.5 L237 29.3 L236 29.4 L235 29.1 L234 29.3 L233 29.2 L232 29.1 L231 29.0 L230 29.1 L229 29.3 L228 29.4 L227 29.0 L226 29.1 L225 28.9 L224 29.1 L223 29.4 L222 29.0 L221 29.3 L220 28.9 L219 29.1 L218 29.1 L217 29.0 L216 28.9 L215 28.9Z" fill="#AEBCDA"/></svg>
<svg style="left:190px;top:499px;" width="8" height="8" viewBox="0 0 8 8"><path d="M1 7.500V2l5.500 5.500z" fill="#fff" stroke="#334" stroke-width=".6"/></svg>
<div style="left:190px;top:450px;width:1px;height:178px;background:repeating-linear-gradient(to bottom,#4A4034 0 1px,transparent 1px 4px)"></div>
<div style="left:329px;top:450px;width:1px;height:178px;background:repeating-linear-gradient(to bottom,#4A4034 0 1px,transparent 1px 4px)"></div>
<div style="left:468px;top:450px;width:1px;height:178px;background:repeating-linear-gradient(to bottom,#4A4034 0 1px,transparent 1px 4px)"></div>
<div style="left:607px;top:450px;width:1px;height:178px;background:repeating-linear-gradient(to bottom,#4A4034 0 1px,transparent 1px 4px)"></div>
<div style="left:746px;top:450px;width:1px;height:178px;background:repeating-linear-gradient(to bottom,#4A4034 0 1px,transparent 1px 4px)"></div>
<div style="left:886px;top:450px;width:1px;height:178px;background:repeating-linear-gradient(to bottom,#4A4034 0 1px,transparent 1px 4px)"></div>
<div style="left:942px;top:416px;width:16px;height:212px;background:#F3F2EC"></div>
<div style="left:943px;top:417px;width:14px;height:15px;background:linear-gradient(#D6E2FE,#B4C8F8);border:1px solid #fff;border-radius:2px;box-shadow:inset 0 0 0 1px #A8BEF0"></div>
<svg style="left:943px;top:417px;" width="14" height="15" viewBox="0 0 14 15"><path d="M3.5 9.0L7.0 5.5L10.5 9.0" stroke="#4D6185" stroke-width="2" fill="none"/></svg>
<div style="left:943px;top:433px;width:14px;height:138px;background:linear-gradient(to right,#CCDAFE,#B8CAF8);border:1px solid #fff;border-radius:2px"></div>
<div style="left:947px;top:499px;width:6px;height:1px;background:#E8F0FE"></div>
<div style="left:947px;top:501px;width:6px;height:1px;background:#E8F0FE"></div>
<div style="left:947px;top:503px;width:6px;height:1px;background:#E8F0FE"></div>
<div style="left:947px;top:505px;width:6px;height:1px;background:#E8F0FE"></div>
<div style="left:943px;top:575px;width:14px;height:14px;background:linear-gradient(#D6E2FE,#B4C8F8);border:1px solid #fff;border-radius:2px;box-shadow:inset 0 0 0 1px #A8BEF0"></div>
<svg style="left:943px;top:575px;" width="14" height="14" viewBox="0 0 14 14"><path d="M3.5 5.5L7.0 9.0L10.5 5.5" stroke="#4D6185" stroke-width="2" fill="none"/></svg>
<div style="left:943px;top:591px;width:14px;height:14px;background:linear-gradient(#D6E2FE,#B4C8F8);border:1px solid #fff;border-radius:2px;box-shadow:inset 0 0 0 1px #A8BEF0"></div>
<svg style="left:943px;top:591px;" width="14" height="14" viewBox="0 0 14 14"><path d="M4.0 7.0h6M7.0 4.0v6" stroke="#1A2A5A" stroke-width="1.800"/></svg>
<div style="left:944px;top:607px;width:12px;height:2px;background:#C0CEF4"></div>
<div style="left:943px;top:612px;width:14px;height:14px;background:linear-gradient(#D6E2FE,#B4C8F8);border:1px solid #fff;border-radius:2px;box-shadow:inset 0 0 0 1px #A8BEF0"></div>
<svg style="left:943px;top:612px;" width="14" height="14" viewBox="0 0 14 14"><path d="M4.0 7.0h6" stroke="#1A2A5A" stroke-width="1.800"/></svg>
<div style="left:190px;top:628px;width:768px;height:15px;background:linear-gradient(#fff 0,#fff 60%,#EEEDE5 100%)"></div>
<div style="left:191px;top:628px;width:14px;height:14px;background:linear-gradient(#D6E2FE,#B4C8F8);border:1px solid #fff;border-radius:2px;box-shadow:inset 0 0 0 1px #A8BEF0"></div>
<svg style="left:191px;top:628px;" width="14" height="14" viewBox="0 0 14 14"><path d="M8.5 3.5L5.0 7.0L8.5 10.5" stroke="#4D6185" stroke-width="2" fill="none"/></svg>
<div style="left:206px;top:629px;width:21px;height:13px;background:linear-gradient(#D0DCFE,#B4C8F8);border:1px solid #fff;border-radius:2px;box-shadow:inset 0 0 0 1px #A8BEF0"></div>
<div style="left:213px;top:632px;width:1px;height:7px;background:#8CA4DC"></div>
<div style="left:215px;top:632px;width:1px;height:7px;background:#8CA4DC"></div>
<div style="left:217px;top:632px;width:1px;height:7px;background:#8CA4DC"></div>
<div style="left:219px;top:632px;width:1px;height:7px;background:#8CA4DC"></div>
<div style="left:889px;top:628px;width:13px;height:14px;background:linear-gradient(#D6E2FE,#B4C8F8);border:1px solid #fff;border-radius:2px;box-shadow:inset 0 0 0 1px #A8BEF0"></div>
<svg style="left:889px;top:628px;" width="13" height="14" viewBox="0 0 13 14"><path d="M5.0 3.5L8.5 7.0L5.0 10.5" stroke="#4D6185" stroke-width="2" fill="none"/></svg>
<div style="left:904px;top:628px;width:15px;height:14px;background:linear-gradient(#D6E2FE,#B4C8F8);border:1px solid #fff;border-radius:2px;box-shadow:inset 0 0 0 1px #A8BEF0"></div>
<svg style="left:904px;top:628px;" width="15" height="14" viewBox="0 0 15 14"><path d="M4.5 7.0h6M7.5 4.0v6" stroke="#1A2A5A" stroke-width="1.800"/></svg>
<div style="left:921px;top:629px;width:2px;height:12px;background:#C0CEF4"></div>
<div style="left:925px;top:628px;width:15px;height:14px;background:linear-gradient(#D6E2FE,#B4C8F8);border:1px solid #fff;border-radius:2px;box-shadow:inset 0 0 0 1px #A8BEF0"></div>
<svg style="left:925px;top:628px;" width="15" height="14" viewBox="0 0 15 14"><path d="M4.5 7.0h6" stroke="#1A2A5A" stroke-width="1.800"/></svg>
<div style="left:942px;top:628px;width:15px;height:14px;background:linear-gradient(#D6E2FE,#B4C8F8);border:1px solid #fff;border-radius:2px;box-shadow:inset 0 0 0 1px #A8BEF0"></div>
<svg style="left:942px;top:628px;" width="15" height="14" viewBox="0 0 15 14"><circle cx="6.5" cy="6.0" r="2.500" fill="none" stroke="#1A2A5A" stroke-width="1.300"/><path d="M8.5 8.0l2.500 2.500" stroke="#1A2A5A" stroke-width="1.600"/></svg>
<div style="left:189px;top:643px;width:769px;height:1px;background:#D8D4C4"></div>
<div style="left:189px;top:645px;width:1px;height:26px;background:#ACA899"></div>
<div style="left:190px;top:645px;width:1px;height:26px;background:#fff"></div>
<div style="left:189px;top:669px;width:769px;height:1px;background:#ACA899"></div>
<div style="left:189px;top:670px;width:769px;height:1px;background:#fff"></div>
<svg style="left:197px;top:649px;" width="15" height="15" viewBox="0 0 15 15"><circle cx="7.500" cy="7.500" r="6.300" fill="#F0D4D8" stroke="#B04858" stroke-width="1.800"/><circle cx="7.500" cy="7.500" r="3.200" fill="#8A2838"/></svg>
<div style="left:219px;top:647px;width:1px;height:20px;background:#C5C2B0"></div>
<div style="left:220px;top:647px;width:1px;height:20px;background:#fff"></div>
<svg style="left:229px;top:650px;" width="12" height="13" viewBox="0 0 12 13"><path d="M9.500 3.500A4.500 4.500 0 1010.500 8" stroke="#5A6878" stroke-width="1.800" fill="none"/><path d="M6.500 0l4.500 3.500-4.500 3z" fill="#5A6878"/></svg>
<div style="left:248px;top:647px;width:1px;height:20px;background:#C5C2B0"></div>
<div style="left:249px;top:647px;width:1px;height:20px;background:#fff"></div>
<svg style="left:256px;top:650px;" width="17" height="13" viewBox="0 0 17 13"><rect x="0" y="0" width="2.500" height="13" fill="#7C8A9C"/><path d="M4 .5v12l12-6z" fill="#7C8A9C" stroke="#5A6878" stroke-width=".7"/></svg>
<svg style="left:280px;top:650px;" width="15" height="13" viewBox="0 0 15 13"><path d="M.5 .5v12l14-6z" fill="#7C8A9C" stroke="#5A6878" stroke-width=".7"/></svg>
<svg style="left:303px;top:650px;" width="14" height="13" viewBox="0 0 14 13"><rect x="1" y="0" width="4.500" height="13" fill="#7C8A9C"/><rect x="8.500" y="0" width="4.500" height="13" fill="#7C8A9C"/></svg>
<svg style="left:327px;top:650px;" width="13" height="13" viewBox="0 0 13 13"><rect x=".5" y=".5" width="12" height="12" fill="#7C8A9C" stroke="#5A6878"/></svg>
<div style="left:347px;top:647px;width:1px;height:20px;background:#C5C2B0"></div>
<div style="left:348px;top:647px;width:1px;height:20px;background:#fff"></div>
<svg style="left:355px;top:651px;" width="12" height="11" viewBox="0 0 12 11"><rect x="0" y="0" width="2.500" height="11" fill="#5A6878"/><path d="M11.500 0v11L3 5.500z" fill="#5A6878"/></svg>
<svg style="left:378px;top:651px;" width="12" height="11" viewBox="0 0 12 11"><rect x="9.500" y="0" width="2.500" height="11" fill="#5A6878"/><path d="M.5 0v11L9 5.500z" fill="#5A6878"/></svg>
<div class="sans" style="left:6px;top:643px;white-space:nowrap;font-size:11px;line-height:13px;letter-spacing:.3px">速率: 0.00</div>
<div style="left:89px;top:650px;width:82px;height:1px;background:#ACA899"></div>
<svg style="left:117px;top:644px;" width="27" height="12" viewBox="0 0 27 12"><path d="M1 6l5-5.500V11.500zM26 6l-5-5.500V11.500z" fill="#7C8CA8"/><path d="M7.500 6l6-5.500 6 5.500-6 5.500z" fill="#8C9CB8" stroke="#5A6A88" stroke-width=".8"/></svg>
<svg style="left:132px;top:656px;" width="12" height="10" viewBox="0 0 12 10"><path d="M6 0l5.500 10H.5z" fill="#C8783C"/></svg>
<div style="left:735px;top:649px;width:72px;height:16px;border:1px solid #ACA899;border-right-color:#fff;border-bottom-color:#fff"></div>
<div style="left:809px;top:649px;width:72px;height:16px;border:1px solid #ACA899;border-right-color:#fff;border-bottom-color:#fff"></div>
<div style="left:883px;top:649px;width:72px;height:16px;border:1px solid #ACA899;border-right-color:#fff;border-bottom-color:#fff"></div>
<div class="sans" style="left:740px;top:650px;white-space:nowrap;font-size:11px;line-height:14px;letter-spacing:.35px">00:00:17;13</div>
<div style="left:774px;top:674px;width:184px;height:17px;border:1px solid #ACA899;border-right-color:#fff;border-bottom-color:#fff"></div>
<div class="sans" style="left:776px;top:675px;white-space:nowrap;font-size:12px;line-height:15px;letter-spacing:-.1px">錄製時間 (2 聲道): 252:00:20</div>
<!-- gen_taskbar -->
<div style="left:0px;top:692px;width:960px;height:28px;background:linear-gradient(to bottom,#3A80F0 0,#2A66E4 3px,#245EDC 8px,#2560DE 20px,#1E52C8 26px,#1A46B0 28px)"></div>
<div style="left:0px;top:692px;width:84px;height:28px;background:radial-gradient(ellipse 60px 18px at 40px 12px,rgba(120,200,120,.35),rgba(0,0,0,0)),linear-gradient(to bottom,#5CB85C 0,#3E9E3E 3px,#358F35 12px,#348C34 22px,#2A762A 28px);border-radius:0 12px 12px 0;box-shadow:2px 0 3px rgba(0,0,40,.5),inset -3px 0 4px rgba(0,40,0,.35)"></div>
<svg style="left:10px;top:696px;" width="18" height="18" viewBox="0 0 18 18"><path d="M1 3c2.500-1.500 5-1.500 7 0l-1.500 6c-2-1.500-4.500-1.500-7 0z" fill="#E8502C"/><path d="M9.500 3.500c2.500 1.500 5 1.500 7 0L15 9.500c-2 1.500-4.500 1.500-7 0z" fill="#6CC040"/><path d="M-.5 10c2.500-1.500 5-1.500 7 0L5 16c-2-1.500-4.500-1.500-7 0z" fill="#3C7CE8"/><path d="M8 10.500c2.500 1.500 5 1.500 7 0l-1.500 6c-2 1.500-4.500 1.500-7 0z" fill="#F0C02C"/></svg>
<div class="sans" style="left:33px;top:696px;white-space:nowrap;font-size:16px;line-height:19px;color:#fff;font-style:italic;font-weight:400;text-shadow:1px 1px 1px #1A4A1A;transform:skewX(-12deg)">開始</div>
<svg style="left:96px;top:699px;" width="15" height="14" viewBox="0 0 15 14"><path d="M.5 2.500V13h14V4H7L5.500 2H1z" fill="#F0C848" stroke="#B08A20"/><path d="M.5 13V6h14v7z" fill="#FCE890" stroke="#B08A20"/></svg>
<svg style="left:118px;top:698px;" width="15" height="15" viewBox="0 0 15 15"><rect x="1" y="4" width="12" height="9" rx="1" fill="#5C8CE0" stroke="#2C4C98"/><path d="M3 6h5v5H3z" fill="#fff"/><path d="M7 1l6 2v7l-6-2z" fill="#E8F0FC" stroke="#4A6AB0" stroke-width=".8"/><path d="M9 9l4 4" stroke="#DDD" stroke-width="1.500"/></svg>
<svg style="left:140px;top:698px;" width="15" height="15" viewBox="0 0 15 15"><circle cx="7.500" cy="7.500" r="7" fill="#D83030" stroke="#E8E8E8" stroke-width="1.200"/><path d="M4 9c1-4 3-5 4-2s2 1 3-2" stroke="#fff" stroke-width="1.600" fill="none"/></svg>
<svg style="left:162px;top:698px;" width="16" height="16" viewBox="0 0 16 16"><circle cx="8" cy="8.500" r="5.800" fill="none" stroke="#4AA0F0" stroke-width="2.600"/><path d="M3 8.500h10" stroke="#4AA0F0" stroke-width="2"/><path d="M1 13C-1 8 8-1 15 1.500" stroke="#F0C838" stroke-width="1.600" fill="none"/></svg>
<div style="left:205px;top:695px;width:131px;height:23px;background:linear-gradient(#5C9CF8 0,#3C80F0 3px,#3A7CEC 18px,#3070DC 23px);border-radius:3px;box-shadow:inset 0 0 0 1px rgba(255,255,255,.12)"></div>
<svg style="left:213px;top:699px;" width="16" height="15" viewBox="0 0 16 15"><path d="M.5 3V13h12V4.500H6L4.500 2.500H1z" fill="#F0D060" stroke="#A88A28"/><rect x="6" y="1" width="8" height="6" fill="#F8F8F8" stroke="#889"/><path d="M.5 13l2-6h13l-2.500 6z" fill="#FCE890" stroke="#A88A28"/></svg>
<div class="ser" style="left:232px;top:700px;white-space:nowrap;font-size:12px;line-height:14px;color:#fff;letter-spacing:-.6px">Windows照相機</div>
<div style="left:339px;top:695px;width:131px;height:23px;background:linear-gradient(#5C9CF8 0,#3C80F0 3px,#3A7CEC 18px,#3070DC 23px);border-radius:3px;box-shadow:inset 0 0 0 1px rgba(255,255,255,.12)"></div>
<svg style="left:347px;top:699px;" width="16" height="16" viewBox="0 0 16 16"><circle cx="8" cy="8.500" r="5.800" fill="none" stroke="#4AA0F0" stroke-width="2.600"/><path d="M3 8.500h10" stroke="#4AA0F0" stroke-width="2"/><path d="M1 13C-1 8 8-1 15 1.500" stroke="#F0C838" stroke-width="1.600" fill="none"/></svg>
<div class="ser" style="left:365px;top:700px;white-space:nowrap;font-size:12px;line-height:14px;color:#fff;letter-spacing:-.5px">d90會出現 問題...</div>
<div style="left:473px;top:695px;width:131px;height:23px;background:linear-gradient(#5C9CF8 0,#3C80F0 3px,#3A7CEC 18px,#3070DC 23px);border-radius:3px;box-shadow:inset 0 0 0 1px rgba(255,255,255,.12)"></div>
<svg style="left:483px;top:699px;" width="14" height="15" viewBox="0 0 14 15"><circle cx="4" cy="3.500" r="2.500" fill="#8CD860"/><path d="M0 13c0-5 8-5 8 0z" fill="#5CB838"/><circle cx="10" cy="4.500" r="2.500" fill="#A8E878"/><path d="M6 14c0-5 8-5 8 0z" fill="#78CC50"/></svg>
<div class="ser" style="left:501px;top:700px;white-space:nowrap;font-size:12px;line-height:14px;color:#fff;letter-spacing:-.5px">Windows Live Mes...</div>
<div style="left:607px;top:695px;width:135px;height:23px;background:linear-gradient(#1C44A8,#1E52C0 30%,#1E54C4);border-radius:3px;box-shadow:inset 1px 1px 1px #0C2C78"></div>
<svg style="left:618px;top:698px;" width="15" height="15" viewBox="0 0 15 15"><circle cx="7.500" cy="7.500" r="7" fill="#3a3f3a"/><circle cx="7.500" cy="7.500" r="5.500" fill="#1b2a4a"/><ellipse cx="7.500" cy="6" rx="4" ry="2.500" fill="#9db28c"/><ellipse cx="7.500" cy="9.500" rx="3.500" ry="1.800" fill="#c0563a"/></svg>
<div class="ser" style="left:637px;top:700px;white-space:nowrap;font-size:12px;line-height:14px;color:#fff;letter-spacing:-.5px">未標題的 * - Sony...</div>
<svg style="left:757px;top:702px;" width="14" height="11" viewBox="0 0 14 11"><rect x=".5" y="1.500" width="13" height="9" rx="1" fill="#F0F0F0" stroke="#333"/><path d="M2.500 4h9M2.500 6h9M4 8.500h6" stroke="#333" stroke-dasharray="1.500 1"/></svg>
<div style="left:781px;top:692px;width:179px;height:28px;background:linear-gradient(to bottom,#1CA0F4 0,#1490EC 3px,#1288E4 20px,#0E78D0 28px);border-left:1px solid #0C58B0;box-shadow:inset 1px 0 0 #38B4F8"></div>
<svg style="left:774px;top:699px;" width="15" height="15" viewBox="0 0 15 15"><circle cx="7.500" cy="7.500" r="7" fill="#3C8CF0" stroke="#A8D4FC" stroke-width="1"/><path d="M9 3.500L5 7.500l4 4" stroke="#fff" stroke-width="2.200" fill="none"/></svg>
<svg style="left:792px;top:698px;" width="15" height="16" viewBox="0 0 15 16"><rect x="1" y="5" width="13" height="10" rx="1" fill="#C8CCD8" stroke="#334"/><circle cx="7.500" cy="10" r="3" fill="#456"/><rect x="4" y="1" width="8" height="5" fill="#E8C060" stroke="#865"/></svg>
<svg style="left:811px;top:698px;" width="13" height="16" viewBox="0 0 13 16"><circle cx="6.500" cy="4" r="3.200" fill="#8CE048"/><path d="M0 15c0-8 13-8 13 0z" fill="#5CC028"/></svg>
<svg style="left:825px;top:698px;" width="15" height="16" viewBox="0 0 15 16"><rect x="4" y="1" width="10" height="8" fill="#2A3A88" stroke="#C8D4F0"/><rect x=".5" y="5" width="10" height="8" fill="#3A4AA0" stroke="#C8D4F0"/><path d="M2 15h8" stroke="#C8D4F0" stroke-width="1.500"/></svg>
<svg style="left:843px;top:698px;" width="13" height="16" viewBox="0 0 13 16"><rect x="1" y="2" width="11" height="13" rx="3" fill="#E87838" stroke="#F8E0C8"/><rect x="3.500" y="5" width="6" height="5" fill="#F8E8D8"/></svg>
<svg style="left:858px;top:698px;" width="15" height="16" viewBox="0 0 15 16"><circle cx="6.500" cy="7" r="6" fill="#9AA0B0" stroke="#445"/><circle cx="6.500" cy="7" r="2" fill="#334"/><path d="M8 13l6-6" stroke="#E8E8F0" stroke-width="2"/></svg>
<div style="left:876px;top:698px;width:15px;height:16px;background:#D82030;border:1px solid #F8D0D0;border-radius:2px"></div>
<div class="sans" style="left:878px;top:698px;white-space:nowrap;font-size:14px;line-height:16px;color:#fff;font-weight:bold">M</div>
<div class="ser" style="left:897px;top:700px;white-space:nowrap;font-size:12px;line-height:14px;color:#fff;letter-spacing:-.4px">下午 06:31</div>
</body></html>
